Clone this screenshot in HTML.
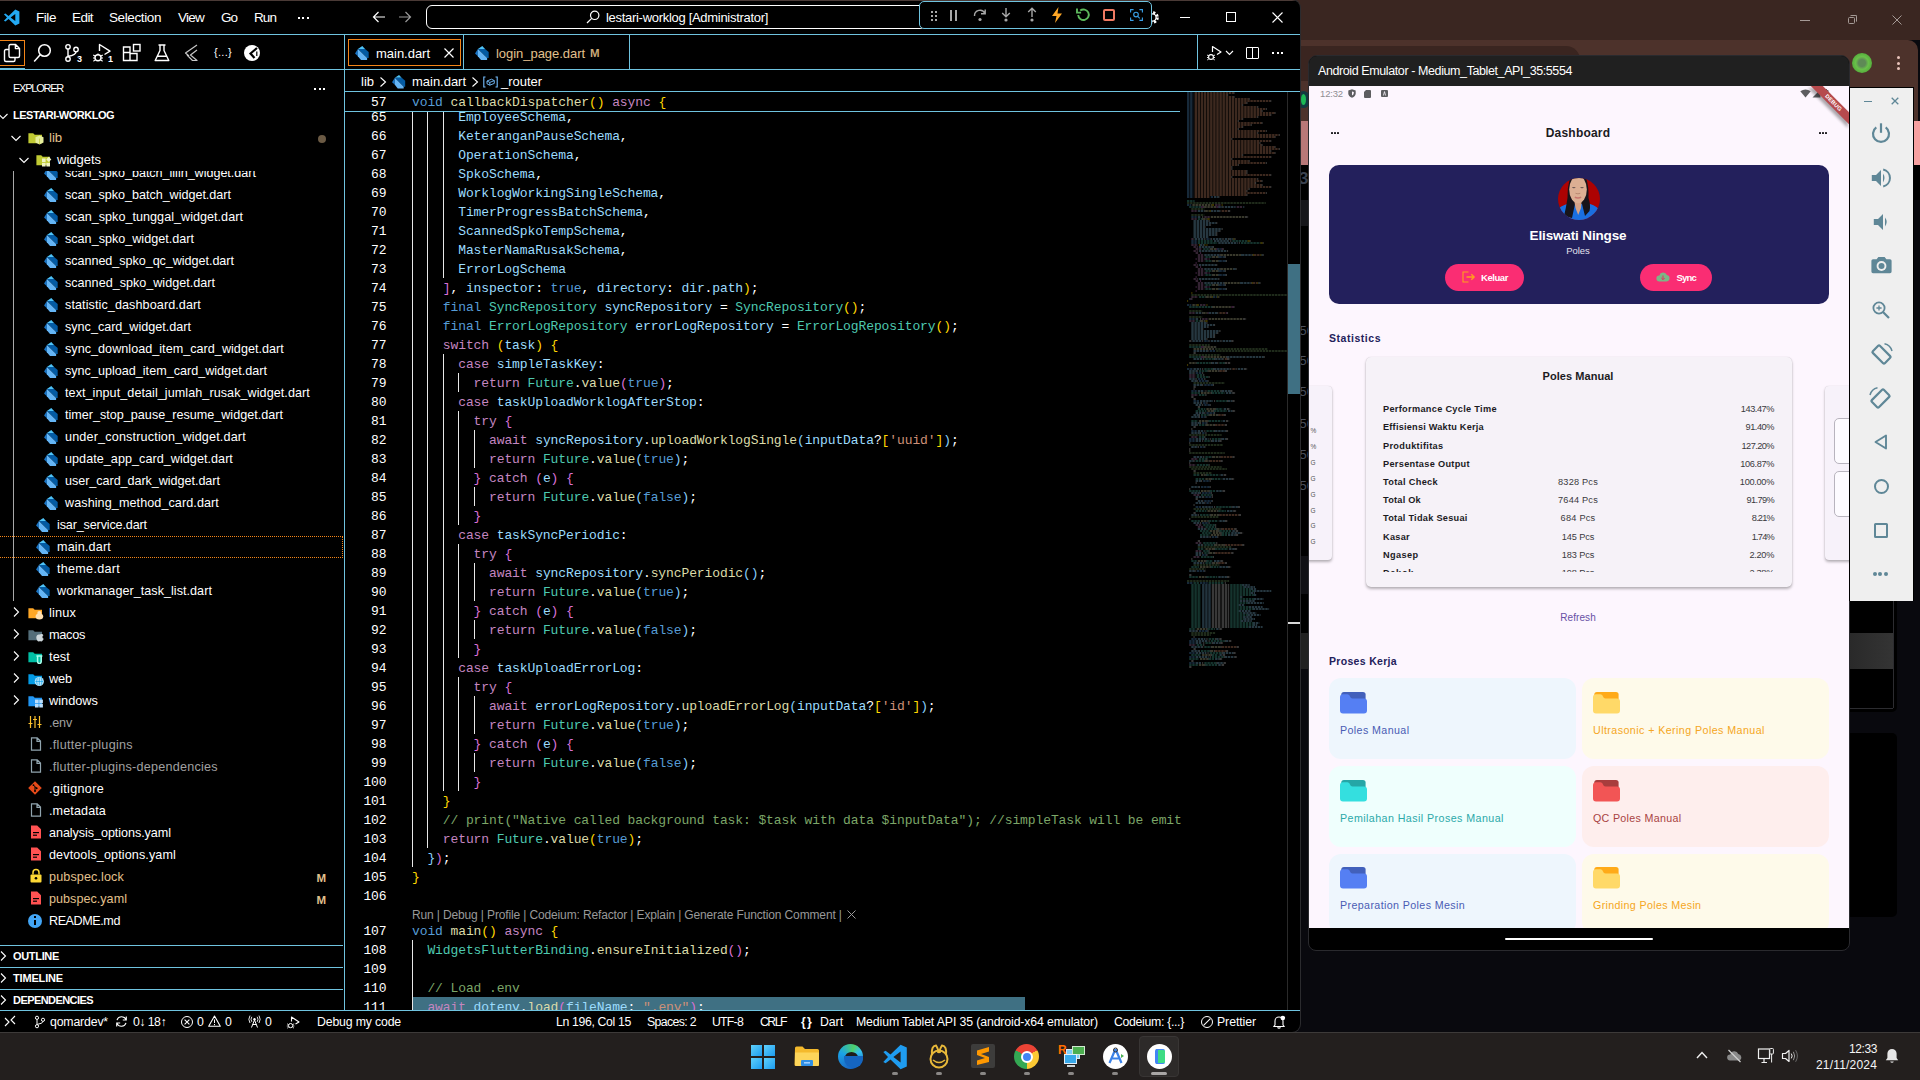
<!DOCTYPE html>
<html><head><meta charset="utf-8"><title>s</title><style>*{box-sizing:border-box;margin:0;padding:0}
html,body{width:1920px;height:1080px;overflow:hidden;background:#0a0a10;font-family:"Liberation Sans",sans-serif;color:#fff}
.a{position:absolute}
.t{position:absolute;white-space:pre;line-height:1}
svg{position:absolute;overflow:visible}
#vsc{position:absolute;left:0;top:0;width:1299.5px;height:1031.5px;background:#000;border-radius:0 8px 8px 0;box-shadow:0 0 0 1px #2b2b2e;overflow:hidden}
.hl{position:absolute;background:#6fc3df;height:1px}
.vl{position:absolute;background:#6fc3df;width:1px}
.code{position:absolute;left:345px;width:842px;height:19px;font-family:"Liberation Mono",monospace;font-size:13px;white-space:pre;line-height:19px;letter-spacing:-0.104px}
.ln{position:absolute;left:0;width:41.5px;text-align:right;color:#fff}
.cx{position:absolute;left:67px}
.k{color:#569cd6}.c{color:#c586c0}.f{color:#dcdcaa}.ty{color:#4ec9b0}.v{color:#9cdcfe}.s{color:#ce9178}.cm{color:#7ca668}.w{color:#fff}
.b1{color:#ffd700}.b2{color:#da70d6}.b3{color:#87cefa}
.ig{position:absolute;width:1px;background:#e8e8e8}
</style></head><body>
<div class="a" style="left:1296.00px;top:0.00px;width:624.00px;height:1033.00px;background:#09090e;"></div><div class="a" style="left:1296.00px;top:0.00px;width:624.00px;height:40.00px;background:#3a2621;"></div><div class="a" style="left:1296px;top:40px;width:622px;height:82px;background:#4d322b;border-radius:0 10px 0 0"></div><div class="a" style="left:1296.00px;top:45.50px;width:284.00px;height:35.00px;background:#3a2520;border-radius:0 14px 0 0"></div><div class="a" style="left:1800.00px;top:20.00px;width:10.00px;height:1.00px;background:#a59a96;"></div><div class="a" style="left:1848px;top:17px;width:7px;height:7px;border:1px solid #a59a96;border-radius:1.5px"></div><div class="a" style="left:1846px;top:15px;width:7px;height:7px;border-top:1px solid #a59a96;border-right:1px solid #a59a96;border-radius:1.5px;left:1850px"></div><svg style="left:1892.00px;top:15.00px;" width="10" height="10" viewBox="0 0 10 10"><path d="M0.5,0.5 L9.5,9.5 M9.5,0.5 L0.5,9.5" stroke="#a59a96" stroke-width="1"/></svg><div class="a" style="left:1852px;top:53px;width:20px;height:20px;border-radius:50%;background:radial-gradient(circle at 50% 50%,#5e8a56 0 25%,#6ac04a 45%,#3f9a2c 100%)"></div><div class="a" style="left:1896.6px;top:56.2px;width:3px;height:3px;border-radius:50%;background:#e9c3ba"></div><div class="a" style="left:1896.6px;top:61.7px;width:3px;height:3px;border-radius:50%;background:#e9c3ba"></div><div class="a" style="left:1896.6px;top:67.2px;width:3px;height:3px;border-radius:50%;background:#e9c3ba"></div><div class="a" style="left:1298px;top:91px;width:11px;height:17px;border-radius:6px;background:#123a40"></div><div class="a" style="left:1301px;top:94px;width:5px;height:11px;border-radius:50%;background:#1db954"></div><div class="a" style="left:1296.00px;top:121.00px;width:624.00px;height:44.00px;background:#f6a0a0;"></div><div class="a" style="left:1296.00px;top:121.00px;width:14.00px;height:44.00px;background:#b87878;"></div><div class="a" style="left:1296.00px;top:165.00px;width:624.00px;height:35.00px;background:#000;"></div><div class="a" style="left:1296.00px;top:200.00px;width:624.00px;height:833.00px;background:#09090e;"></div><div class="a" style="left:1296.00px;top:200.00px;width:14.00px;height:440.00px;background:#000;"></div><div class="t" style="left:1299.50px;top:323.85px;font-size:13.00px;color:#4a4f5c;">56</div><div class="t" style="left:1299.50px;top:353.85px;font-size:13.00px;color:#4a4f5c;">56</div><div class="t" style="left:1299.50px;top:384.85px;font-size:13.00px;color:#4a4f5c;">56</div><div class="t" style="left:1299.50px;top:416.85px;font-size:13.00px;color:#4a4f5c;">56</div><div class="t" style="left:1299.50px;top:447.85px;font-size:13.00px;color:#4a4f5c;">56</div><div class="t" style="left:1299.50px;top:478.85px;font-size:13.00px;color:#4a4f5c;">56</div><div class="t" style="left:1299.00px;top:169.85px;font-size:17.00px;color:#3a4250;font-weight:700;">3</div><div class="a" style="left:1300.00px;top:633.00px;width:9.00px;height:36.00px;background:#212121;"></div><div class="a" style="left:1300.00px;top:556.00px;width:9.00px;height:38.00px;background:#101014;"></div><div class="a" style="left:1300.00px;top:200.00px;width:9.00px;height:26.00px;background:#16161a;"></div><div class="a" style="left:1840px;top:600px;width:56.5px;height:112px;background:#000;border-radius:0 0 5px 0"></div><div class="a" style="left:1840px;top:633px;width:53px;height:36px;background:linear-gradient(90deg,#272727,#343434)"></div><div class="a" style="left:1893.00px;top:600.00px;width:1.00px;height:108.00px;background:#2c2c30;"></div><div class="a" style="left:1840.00px;top:707.50px;width:53.00px;height:1.00px;background:#2c2c30;"></div><div class="a" style="left:1840px;top:733px;width:56.5px;height:184px;background:#000;border-radius:0 5px 5px 0"></div>
<div id="vsc">
<div class="a" style="left:0.00px;top:0.00px;width:1301.00px;height:1.00px;background:#4a3a36;"></div><svg style="left:3.00px;top:9.00px;" width="17" height="17" viewBox="0 0 17 17"><path d="M12.3,0.6 L5.6,7 2.4,4.5 0.9,5.3 4,8.5 0.9,11.7 2.4,12.5 5.6,10 12.3,16.4 16.4,14.6 V2.4 Z M12.3,5 V12 L7.6,8.5 Z" fill="#23a9f2" fill-rule="evenodd"/></svg><div class="t" style="left:36.00px;top:11.10px;font-size:13.50px;color:#fff;letter-spacing:-0.438px;">File</div><div class="t" style="left:72.00px;top:11.10px;font-size:13.50px;color:#fff;letter-spacing:-0.566px;">Edit</div><div class="t" style="left:109.00px;top:11.10px;font-size:13.50px;color:#fff;letter-spacing:-0.393px;">Selection</div><div class="t" style="left:178.00px;top:11.10px;font-size:13.50px;color:#fff;letter-spacing:-0.754px;">View</div><div class="t" style="left:221.00px;top:11.10px;font-size:13.50px;color:#fff;letter-spacing:-1.004px;">Go</div><div class="t" style="left:254.00px;top:11.10px;font-size:13.50px;color:#fff;letter-spacing:-0.922px;">Run</div><div class="a" style="left:298.00px;top:16.50px;width:2.00px;height:2.00px;background:#fff;"></div><div class="a" style="left:302.30px;top:16.50px;width:2.00px;height:2.00px;background:#fff;"></div><div class="a" style="left:306.60px;top:16.50px;width:2.00px;height:2.00px;background:#fff;"></div><svg style="left:372.00px;top:10.00px;" width="14" height="14" viewBox="0 0 14 14"><path d="M13,7 H1.5 M6.5,2 L1.5,7 6.5,12" fill="none" stroke="#fff" stroke-width="1.2"/></svg><svg style="left:398.00px;top:10.00px;" width="14" height="14" viewBox="0 0 14 14"><path d="M1,7 H12.5 M7.5,2 L12.5,7 7.5,12" fill="none" stroke="#9a9a9a" stroke-width="1.2"/></svg><div class="a" style="left:426px;top:5px;width:500px;height:24px;border:1px solid #fff;border-radius:6px"></div><svg style="left:586.00px;top:10.00px;" width="14" height="14" viewBox="0 0 14 14"><circle cx="8.7" cy="5.3" r="4.2" fill="none" stroke="#fff" stroke-width="1.2"/><path d="M5.7,8.3 L1,13" stroke="#fff" stroke-width="1.2"/></svg><div class="t" style="left:606.00px;top:11.35px;font-size:13.00px;color:#fff;letter-spacing:-0.297px;">lestari-worklog [Administrator]</div><svg style="left:1144.00px;top:9.00px;" width="17" height="17" viewBox="0 0 17 17"><circle cx="8.5" cy="8.5" r="5" fill="none" stroke="#fff" stroke-width="2.6" stroke-dasharray="2.2 1.73"/><circle cx="8.5" cy="8.5" r="3.6" fill="none" stroke="#fff" stroke-width="1.3"/></svg><div class="a" style="left:919px;top:1px;width:233px;height:28px;background:#000;border:1px solid #6fc3df;border-radius:5px"></div><div class="a" style="left:931.00px;top:10.50px;width:2.00px;height:2.00px;background:#a8a8a8;"></div><div class="a" style="left:935.00px;top:10.50px;width:2.00px;height:2.00px;background:#a8a8a8;"></div><div class="a" style="left:931.00px;top:14.50px;width:2.00px;height:2.00px;background:#a8a8a8;"></div><div class="a" style="left:935.00px;top:14.50px;width:2.00px;height:2.00px;background:#a8a8a8;"></div><div class="a" style="left:931.00px;top:18.50px;width:2.00px;height:2.00px;background:#a8a8a8;"></div><div class="a" style="left:935.00px;top:18.50px;width:2.00px;height:2.00px;background:#a8a8a8;"></div><div class="a" style="left:950.00px;top:10.00px;width:1.60px;height:11.00px;background:#a8a8a8;"></div><div class="a" style="left:955.00px;top:10.00px;width:1.60px;height:11.00px;background:#a8a8a8;"></div><svg style="left:972.00px;top:7.00px;" width="16" height="16" viewBox="0 0 16 16"><path d="M2.5,9 A5.5,5.5 0 0 1 13,6.5 M13.2,2.5 V6.8 H9" fill="none" stroke="#a8a8a8" stroke-width="1.4"/><circle cx="8" cy="12.5" r="1.6" fill="#a8a8a8"/></svg><svg style="left:998.00px;top:7.00px;" width="16" height="16" viewBox="0 0 16 16"><path d="M8,1 V9.5 M4.2,6 L8,9.8 11.8,6" fill="none" stroke="#a8a8a8" stroke-width="1.4"/><circle cx="8" cy="13" r="1.6" fill="#a8a8a8"/></svg><svg style="left:1024.00px;top:7.00px;" width="16" height="16" viewBox="0 0 16 16"><path d="M8,10 V1.5 M4.2,5 L8,1.2 11.8,5" fill="none" stroke="#a8a8a8" stroke-width="1.4"/><circle cx="8" cy="13" r="1.6" fill="#a8a8a8"/></svg><svg style="left:1050.00px;top:6.00px;" width="14" height="18" viewBox="0 0 14 18"><path d="M8.5,1 L2,10 H6.5 L5,17 L12,7.5 H7.5 Z" fill="#ffa726"/></svg><svg style="left:1075.00px;top:6.00px;" width="17" height="17" viewBox="0 0 17 17"><path d="M3.2,9 A5.3,5.3 0 1 0 5.2,4.6 M2,2.5 V6.6 H6.1" fill="none" stroke="#5cb85c" stroke-width="1.9"/></svg><div class="a" style="left:1103px;top:8.5px;width:12px;height:12px;border:2px solid #f07a62;border-radius:2px"></div><svg style="left:1130.00px;top:9.00px;" width="13" height="12" viewBox="0 0 13 12"><path d="M0.6,3.6 V0.6 H3.6 M9.4,0.6 H12.4 V3.6 M12.4,8.4 V11.4 H9.4 M3.6,11.4 H0.6 V8.4" fill="none" stroke="#3aa0e8" stroke-width="1.1"/><circle cx="6" cy="5.6" r="2.3" fill="none" stroke="#3aa0e8" stroke-width="1.1"/><path d="M7.7,7.3 L9.8,9.4" stroke="#3aa0e8" stroke-width="1.1"/></svg><div class="a" style="left:1180.00px;top:16.50px;width:10.00px;height:1.00px;background:#fff;"></div><div class="a" style="left:1226px;top:12px;width:10px;height:10px;border:1px solid #fff"></div><svg style="left:1271.50px;top:11.50px;" width="11" height="11" viewBox="0 0 11 11"><path d="M0.5,0.5 L10.5,10.5 M10.5,0.5 L0.5,10.5" stroke="#fff" stroke-width="1.1"/></svg>
<div class="a" style="left:-1px;top:40px;width:26px;height:26px;border:1px solid #f38518"></div><div class="a" style="left:0.00px;top:67.50px;width:25.00px;height:2.00px;background:#6fc3df;"></div><svg style="left:3.00px;top:43.00px;" width="18" height="20" viewBox="0 0 18 20"><path d="M6,6.5 H3 Q1.5,6.5 1.5,8 V17 Q1.5,18.5 3,18.5 H10.5 Q12,18.5 12,17 V14.6" fill="none" stroke="#fff" stroke-width="1.4"/><path d="M7.5,1.5 H12.6 L16.5,5.4 V13 Q16.5,14.5 15,14.5 H7.5 Q6,14.5 6,13 V3 Q6,1.5 7.5,1.5 Z M12.4,1.7 V5.6 H16.3" fill="none" stroke="#fff" stroke-width="1.4" stroke-linejoin="round"/></svg><svg style="left:33.00px;top:43.00px;" width="20" height="20" viewBox="0 0 20 20"><circle cx="11.5" cy="7.5" r="5.8" fill="none" stroke="#fff" stroke-width="1.5"/><path d="M7.4,11.6 L1.2,18.5" stroke="#fff" stroke-width="1.5"/></svg><svg style="left:63.00px;top:43.00px;" width="22" height="20" viewBox="0 0 22 20"><circle cx="5" cy="3.8" r="2.2" fill="none" stroke="#fff" stroke-width="1.4"/><circle cx="5" cy="16" r="2.2" fill="none" stroke="#fff" stroke-width="1.4"/><circle cx="13" cy="6.5" r="2.2" fill="none" stroke="#fff" stroke-width="1.4"/><path d="M5,6 V13.8 M13,8.7 Q13,12 5.2,13.2" fill="none" stroke="#fff" stroke-width="1.4"/></svg><div class="t" style="left:77.00px;top:55.35px;font-size:9.00px;color:#fff;font-weight:700;">3</div><svg style="left:92.00px;top:43.00px;" width="22" height="20" viewBox="0 0 22 20"><path d="M7.5,8 V1.5 L18,8.2 L12.5,11.5" fill="none" stroke="#fff" stroke-width="1.4" stroke-linejoin="round"/><circle cx="6" cy="14.8" r="3" fill="none" stroke="#fff" stroke-width="1.4"/><path d="M1.2,12 L3.5,13.3 M1,15 H3 M1.4,18.3 L3.6,16.6 M10.8,12 L8.5,13.3 M11,15 H9 M10.6,18.3 L8.4,16.6 M6,11.8 V10.6" stroke="#fff" stroke-width="1.1"/></svg><div class="t" style="left:108.00px;top:55.35px;font-size:9.00px;color:#fff;font-weight:700;">1</div><svg style="left:122.00px;top:43.00px;" width="20" height="20" viewBox="0 0 20 20"><path d="M1.5,9.5 H8 V17.5 H1.5 Z M8,9.5 V17.5 H15 V10.5 H8 M1.5,9.5 V4 H8 V10 " fill="none" stroke="#fff" stroke-width="1.4"/><rect x="11.5" y="1.5" width="6.5" height="6.5" fill="none" stroke="#fff" stroke-width="1.4"/></svg><svg style="left:154.00px;top:44.00px;" width="16" height="18" viewBox="0 0 16 18"><path d="M4.5,1 H11.5 M6,1 V6.5 L1.2,16.5 H14.8 L10,6.5 V1 M3.2,12.2 H12.8" fill="none" stroke="#fff" stroke-width="1.4" stroke-linejoin="round"/></svg><svg style="left:184.00px;top:44.00px;" width="16" height="18" viewBox="0 0 16 18"><path d="M13,1 L1.5,9 L5,12 M13,6 L6.5,11 L13,16.5 H8.5 L3,11" fill="none" stroke="#c8c8c8" stroke-width="1.2" stroke-linejoin="round"/></svg><div class="t" style="left:214.00px;top:46.85px;font-size:11.00px;color:#fff;letter-spacing:0.297px;">{...}</div><div class="a" style="left:244px;top:45px;width:16px;height:16px;border-radius:50%;background:#fff"></div><svg style="left:244.00px;top:45.00px;" width="16" height="16" viewBox="0 0 16 16"><path d="M13,3 L6.5,8.5 L10.5,13" fill="none" stroke="#000" stroke-width="2.2"/><path d="M12.8,6.5 V11" stroke="#000" stroke-width="1.2"/></svg>
<div class="a" style="left:348px;top:39px;width:113px;height:27px;border:1px solid #f38518"></div><svg style="left:355.00px;top:46.00px;" width="14" height="14" viewBox="0 0 14 14"><polygon points="7.3,0 2.9,2.9 10.05,2.95" fill="#4fc3f7"/><polygon points="2.9,2.9 10.05,2.95 13.7,6 13.7,12.1 12.1,12.1" fill="#045ba3"/><polygon points="2.9,2.9 0.07,7.4 2.9,10.2" fill="#1b76c8"/><polygon points="2.9,2.9 12.1,12.1 12.1,13.9 6,13.9 2.9,10.2" fill="#64b5f6"/></svg><div class="t" style="left:376.00px;top:46.85px;font-size:13.00px;color:#fff;letter-spacing:-0.021px;">main.dart</div><svg style="left:443.50px;top:47.50px;" width="10" height="10" viewBox="0 0 10 10"><path d="M0.5,0.5 L9.5,9.5 M9.5,0.5 L0.5,9.5" stroke="#fff" stroke-width="1.2"/></svg><div class="vl" style="left:463px;top:35px;height:34px"></div><svg style="left:475.00px;top:46.00px;" width="14" height="14" viewBox="0 0 14 14"><polygon points="7.3,0 2.9,2.9 10.05,2.95" fill="#4fc3f7"/><polygon points="2.9,2.9 10.05,2.95 13.7,6 13.7,12.1 12.1,12.1" fill="#045ba3"/><polygon points="2.9,2.9 0.07,7.4 2.9,10.2" fill="#1b76c8"/><polygon points="2.9,2.9 12.1,12.1 12.1,13.9 6,13.9 2.9,10.2" fill="#64b5f6"/></svg><div class="t" style="left:496.00px;top:46.85px;font-size:13.00px;color:#e2c08d;letter-spacing:-0.042px;">login_page.dart</div><div class="t" style="left:590.00px;top:48.10px;font-size:11.50px;color:#c9a978;font-weight:700;">M</div><div class="vl" style="left:629px;top:35px;height:34px"></div><div class="vl" style="left:1197px;top:35px;height:34px"></div><svg style="left:1206.00px;top:44.00px;" width="18" height="18" viewBox="0 0 18 18"><path d="M6.5,8 V2.5 L15,8 L11,10.5" fill="none" stroke="#fff" stroke-width="1.2" stroke-linejoin="round"/><circle cx="5" cy="13" r="2.4" fill="none" stroke="#fff" stroke-width="1.1"/><path d="M1,11 L3,12 M1,13.5 H2.6 M1.2,16 L3,14.7 M9,11 L7,12 M9,13.5 H7.4 M8.8,16 L7,14.7" stroke="#fff" stroke-width="0.9"/></svg><svg style="left:1225.00px;top:49.00px;" width="9" height="8" viewBox="0 0 9 8"><polyline points="1,2 4.5,5.5 8,2" fill="none" stroke="#fff" stroke-width="1.1"/></svg><div class="a" style="left:1246px;top:46.5px;width:13px;height:12px;border:1.3px solid #fff;border-radius:1px"></div><div class="a" style="left:1252.00px;top:47.00px;width:1.30px;height:11.00px;background:#fff;"></div><div class="a" style="left:1272.00px;top:52.00px;width:2.00px;height:2.00px;background:#fff;"></div><div class="a" style="left:1276.50px;top:52.00px;width:2.00px;height:2.00px;background:#fff;"></div><div class="a" style="left:1281.00px;top:52.00px;width:2.00px;height:2.00px;background:#fff;"></div>
<div class="t" style="left:361.00px;top:75.35px;font-size:13.00px;color:#fff;letter-spacing:-0.002px;">lib</div><svg style="left:378.00px;top:76.00px;" width="10" height="12" viewBox="0 0 10 12"><polyline points="2.5,1.5 7.5,6 2.5,10.5" fill="none" stroke="#fff" stroke-width="1.1"/></svg><svg style="left:391.50px;top:74.50px;" width="13.5" height="13.5" viewBox="0 0 14 14"><polygon points="7.3,0 2.9,2.9 10.05,2.95" fill="#4fc3f7"/><polygon points="2.9,2.9 10.05,2.95 13.7,6 13.7,12.1 12.1,12.1" fill="#045ba3"/><polygon points="2.9,2.9 0.07,7.4 2.9,10.2" fill="#1b76c8"/><polygon points="2.9,2.9 12.1,12.1 12.1,13.9 6,13.9 2.9,10.2" fill="#64b5f6"/></svg><div class="t" style="left:412.00px;top:75.35px;font-size:13.00px;color:#fff;letter-spacing:-0.021px;">main.dart</div><svg style="left:470.00px;top:76.00px;" width="10" height="12" viewBox="0 0 10 12"><polyline points="2.5,1.5 7.5,6 2.5,10.5" fill="none" stroke="#fff" stroke-width="1.1"/></svg><svg style="left:483.00px;top:76.00px;" width="16" height="12" viewBox="0 0 16 12"><path d="M2.5,1 H0.8 V11 H2.5 M12.5,1 H14.2 V11 H12.5" fill="none" stroke="#75beff" stroke-width="1.1"/><path d="M4,5 L8.5,3.2 L11.3,4.6 V7.4 L6.8,9.2 L4,7.8 Z M4,5 L6.8,6.4 L11.3,4.6 M6.8,6.4 V9.2" fill="none" stroke="#75beff" stroke-width="0.9"/></svg><div class="t" style="left:501.00px;top:75.35px;font-size:13.00px;color:#fff;letter-spacing:-0.027px;">_router</div>
<div class="t" style="left:13.00px;top:82.85px;font-size:11.00px;color:#fff;letter-spacing:-1.239px;">EXPLORER</div><div class="a" style="left:314.00px;top:87.50px;width:2.00px;height:2.00px;background:#fff;"></div><div class="a" style="left:318.50px;top:87.50px;width:2.00px;height:2.00px;background:#fff;"></div><div class="a" style="left:323.00px;top:87.50px;width:2.00px;height:2.00px;background:#fff;"></div><svg style="left:-3.00px;top:109.50px;" width="12" height="12" viewBox="0 0 12 12"><polyline points="1.5,4 6,8.5 10.5,4" fill="none" stroke="#fff" stroke-width="1.1"/></svg><div class="t" style="left:13.00px;top:110.35px;font-size:11.00px;color:#fff;letter-spacing:-0.504px;font-weight:700;">LESTARI-WORKLOG</div><svg style="left:10.00px;top:131.50px;" width="12" height="12" viewBox="0 0 12 12"><polyline points="1.5,4 6,8.5 10.5,4" fill="none" stroke="#fff" stroke-width="1.1"/></svg><svg style="left:28.00px;top:131.00px;" width="16" height="14" viewBox="0 0 16 14"><path d="M0.4,2.2 h4.8 l1.5,1.5 h7.3 v8.6 h-13.6 z" fill="#c0ca33"/><path d="M7.5,6.2 L11.5,4.6 L15.5,6.2 V11.5 L11.5,13.4 L7.5,11.5 Z" fill="#e6ee9c"/><path d="M11.5,7.6 V13" stroke="#c0ca33" stroke-width=".7"/></svg><div class="t" style="left:49.00px;top:131.25px;font-size:13.20px;color:#e2c08d;">lib</div><div class="a" style="left:317.5px;top:134.5px;width:8px;height:8px;border-radius:50%;background:#6b5a44"></div><svg style="left:18.00px;top:153.50px;" width="12" height="12" viewBox="0 0 12 12"><polyline points="1.5,4 6,8.5 10.5,4" fill="none" stroke="#fff" stroke-width="1.1"/></svg><svg style="left:36.00px;top:153.00px;" width="16" height="14" viewBox="0 0 16 14"><path d="M0.4,2.2 h4.8 l1.5,1.5 h7.3 v8.6 h-13.6 z" fill="#c0ca33"/><rect x="6" y="5.5" width="3.6" height="3.6" fill="#f0f4c3"/><rect x="6" y="9.9" width="3.6" height="3.6" fill="#f0f4c3"/><rect x="10.4" y="9.9" width="3.6" height="3.6" fill="#f0f4c3"/><rect x="11" y="4.6" width="3.6" height="3.6" fill="#f0f4c3" transform="rotate(45 12.8 6.4)"/></svg><div class="t" style="left:57.00px;top:153.35px;font-size:13.00px;color:#fff;letter-spacing:-0.011px;">widgets</div><div class="a" style="left:13.00px;top:170.50px;width:1.00px;height:430.00px;background:#a8a8a8;"></div><div class="a" style="left:0;top:170.5px;width:343px;height:440px;overflow:hidden"><svg style="left:44.00px;top:-4.50px;" width="14" height="14" viewBox="0 0 14 14"><polygon points="7.3,0 2.9,2.9 10.05,2.95" fill="#4fc3f7"/><polygon points="2.9,2.9 10.05,2.95 13.7,6 13.7,12.1 12.1,12.1" fill="#045ba3"/><polygon points="2.9,2.9 0.07,7.4 2.9,10.2" fill="#1b76c8"/><polygon points="2.9,2.9 12.1,12.1 12.1,13.9 6,13.9 2.9,10.2" fill="#64b5f6"/></svg><div class="t" style="left:65.00px;top:-3.95px;font-size:12.60px;color:#fff;letter-spacing:-0.028px;">scan_spko_batch_lilin_widget.dart</div><svg style="left:44.00px;top:17.50px;" width="14" height="14" viewBox="0 0 14 14"><polygon points="7.3,0 2.9,2.9 10.05,2.95" fill="#4fc3f7"/><polygon points="2.9,2.9 10.05,2.95 13.7,6 13.7,12.1 12.1,12.1" fill="#045ba3"/><polygon points="2.9,2.9 0.07,7.4 2.9,10.2" fill="#1b76c8"/><polygon points="2.9,2.9 12.1,12.1 12.1,13.9 6,13.9 2.9,10.2" fill="#64b5f6"/></svg><div class="t" style="left:65.00px;top:18.05px;font-size:12.60px;color:#fff;letter-spacing:-0.026px;">scan_spko_batch_widget.dart</div><svg style="left:44.00px;top:39.50px;" width="14" height="14" viewBox="0 0 14 14"><polygon points="7.3,0 2.9,2.9 10.05,2.95" fill="#4fc3f7"/><polygon points="2.9,2.9 10.05,2.95 13.7,6 13.7,12.1 12.1,12.1" fill="#045ba3"/><polygon points="2.9,2.9 0.07,7.4 2.9,10.2" fill="#1b76c8"/><polygon points="2.9,2.9 12.1,12.1 12.1,13.9 6,13.9 2.9,10.2" fill="#64b5f6"/></svg><div class="t" style="left:65.00px;top:40.05px;font-size:12.60px;color:#fff;letter-spacing:0.027px;">scan_spko_tunggal_widget.dart</div><svg style="left:44.00px;top:61.50px;" width="14" height="14" viewBox="0 0 14 14"><polygon points="7.3,0 2.9,2.9 10.05,2.95" fill="#4fc3f7"/><polygon points="2.9,2.9 10.05,2.95 13.7,6 13.7,12.1 12.1,12.1" fill="#045ba3"/><polygon points="2.9,2.9 0.07,7.4 2.9,10.2" fill="#1b76c8"/><polygon points="2.9,2.9 12.1,12.1 12.1,13.9 6,13.9 2.9,10.2" fill="#64b5f6"/></svg><div class="t" style="left:65.00px;top:62.05px;font-size:12.60px;color:#fff;letter-spacing:0.006px;">scan_spko_widget.dart</div><svg style="left:44.00px;top:83.50px;" width="14" height="14" viewBox="0 0 14 14"><polygon points="7.3,0 2.9,2.9 10.05,2.95" fill="#4fc3f7"/><polygon points="2.9,2.9 10.05,2.95 13.7,6 13.7,12.1 12.1,12.1" fill="#045ba3"/><polygon points="2.9,2.9 0.07,7.4 2.9,10.2" fill="#1b76c8"/><polygon points="2.9,2.9 12.1,12.1 12.1,13.9 6,13.9 2.9,10.2" fill="#64b5f6"/></svg><div class="t" style="left:65.00px;top:84.05px;font-size:12.60px;color:#fff;letter-spacing:-0.045px;">scanned_spko_qc_widget.dart</div><svg style="left:44.00px;top:105.50px;" width="14" height="14" viewBox="0 0 14 14"><polygon points="7.3,0 2.9,2.9 10.05,2.95" fill="#4fc3f7"/><polygon points="2.9,2.9 10.05,2.95 13.7,6 13.7,12.1 12.1,12.1" fill="#045ba3"/><polygon points="2.9,2.9 0.07,7.4 2.9,10.2" fill="#1b76c8"/><polygon points="2.9,2.9 12.1,12.1 12.1,13.9 6,13.9 2.9,10.2" fill="#64b5f6"/></svg><div class="t" style="left:65.00px;top:106.05px;font-size:12.60px;color:#fff;letter-spacing:0.004px;">scanned_spko_widget.dart</div><svg style="left:44.00px;top:127.50px;" width="14" height="14" viewBox="0 0 14 14"><polygon points="7.3,0 2.9,2.9 10.05,2.95" fill="#4fc3f7"/><polygon points="2.9,2.9 10.05,2.95 13.7,6 13.7,12.1 12.1,12.1" fill="#045ba3"/><polygon points="2.9,2.9 0.07,7.4 2.9,10.2" fill="#1b76c8"/><polygon points="2.9,2.9 12.1,12.1 12.1,13.9 6,13.9 2.9,10.2" fill="#64b5f6"/></svg><div class="t" style="left:65.00px;top:128.05px;font-size:12.60px;color:#fff;letter-spacing:0.093px;">statistic_dashboard.dart</div><svg style="left:44.00px;top:149.50px;" width="14" height="14" viewBox="0 0 14 14"><polygon points="7.3,0 2.9,2.9 10.05,2.95" fill="#4fc3f7"/><polygon points="2.9,2.9 10.05,2.95 13.7,6 13.7,12.1 12.1,12.1" fill="#045ba3"/><polygon points="2.9,2.9 0.07,7.4 2.9,10.2" fill="#1b76c8"/><polygon points="2.9,2.9 12.1,12.1 12.1,13.9 6,13.9 2.9,10.2" fill="#64b5f6"/></svg><div class="t" style="left:65.00px;top:150.05px;font-size:12.60px;color:#fff;letter-spacing:-0.003px;">sync_card_widget.dart</div><svg style="left:44.00px;top:171.50px;" width="14" height="14" viewBox="0 0 14 14"><polygon points="7.3,0 2.9,2.9 10.05,2.95" fill="#4fc3f7"/><polygon points="2.9,2.9 10.05,2.95 13.7,6 13.7,12.1 12.1,12.1" fill="#045ba3"/><polygon points="2.9,2.9 0.07,7.4 2.9,10.2" fill="#1b76c8"/><polygon points="2.9,2.9 12.1,12.1 12.1,13.9 6,13.9 2.9,10.2" fill="#64b5f6"/></svg><div class="t" style="left:65.00px;top:172.05px;font-size:12.60px;color:#fff;letter-spacing:0.033px;">sync_download_item_card_widget.dart</div><svg style="left:44.00px;top:193.50px;" width="14" height="14" viewBox="0 0 14 14"><polygon points="7.3,0 2.9,2.9 10.05,2.95" fill="#4fc3f7"/><polygon points="2.9,2.9 10.05,2.95 13.7,6 13.7,12.1 12.1,12.1" fill="#045ba3"/><polygon points="2.9,2.9 0.07,7.4 2.9,10.2" fill="#1b76c8"/><polygon points="2.9,2.9 12.1,12.1 12.1,13.9 6,13.9 2.9,10.2" fill="#64b5f6"/></svg><div class="t" style="left:65.00px;top:194.05px;font-size:12.60px;color:#fff;letter-spacing:0.008px;">sync_upload_item_card_widget.dart</div><svg style="left:44.00px;top:215.50px;" width="14" height="14" viewBox="0 0 14 14"><polygon points="7.3,0 2.9,2.9 10.05,2.95" fill="#4fc3f7"/><polygon points="2.9,2.9 10.05,2.95 13.7,6 13.7,12.1 12.1,12.1" fill="#045ba3"/><polygon points="2.9,2.9 0.07,7.4 2.9,10.2" fill="#1b76c8"/><polygon points="2.9,2.9 12.1,12.1 12.1,13.9 6,13.9 2.9,10.2" fill="#64b5f6"/></svg><div class="t" style="left:65.00px;top:216.05px;font-size:12.60px;color:#fff;letter-spacing:0.063px;">text_input_detail_jumlah_rusak_widget.dart</div><svg style="left:44.00px;top:237.50px;" width="14" height="14" viewBox="0 0 14 14"><polygon points="7.3,0 2.9,2.9 10.05,2.95" fill="#4fc3f7"/><polygon points="2.9,2.9 10.05,2.95 13.7,6 13.7,12.1 12.1,12.1" fill="#045ba3"/><polygon points="2.9,2.9 0.07,7.4 2.9,10.2" fill="#1b76c8"/><polygon points="2.9,2.9 12.1,12.1 12.1,13.9 6,13.9 2.9,10.2" fill="#64b5f6"/></svg><div class="t" style="left:65.00px;top:238.05px;font-size:12.60px;color:#fff;letter-spacing:0.005px;">timer_stop_pause_resume_widget.dart</div><svg style="left:44.00px;top:259.50px;" width="14" height="14" viewBox="0 0 14 14"><polygon points="7.3,0 2.9,2.9 10.05,2.95" fill="#4fc3f7"/><polygon points="2.9,2.9 10.05,2.95 13.7,6 13.7,12.1 12.1,12.1" fill="#045ba3"/><polygon points="2.9,2.9 0.07,7.4 2.9,10.2" fill="#1b76c8"/><polygon points="2.9,2.9 12.1,12.1 12.1,13.9 6,13.9 2.9,10.2" fill="#64b5f6"/></svg><div class="t" style="left:65.00px;top:260.05px;font-size:12.60px;color:#fff;letter-spacing:0.173px;">under_construction_widget.dart</div><svg style="left:44.00px;top:281.50px;" width="14" height="14" viewBox="0 0 14 14"><polygon points="7.3,0 2.9,2.9 10.05,2.95" fill="#4fc3f7"/><polygon points="2.9,2.9 10.05,2.95 13.7,6 13.7,12.1 12.1,12.1" fill="#045ba3"/><polygon points="2.9,2.9 0.07,7.4 2.9,10.2" fill="#1b76c8"/><polygon points="2.9,2.9 12.1,12.1 12.1,13.9 6,13.9 2.9,10.2" fill="#64b5f6"/></svg><div class="t" style="left:65.00px;top:282.05px;font-size:12.60px;color:#fff;letter-spacing:0.047px;">update_app_card_widget.dart</div><svg style="left:44.00px;top:303.50px;" width="14" height="14" viewBox="0 0 14 14"><polygon points="7.3,0 2.9,2.9 10.05,2.95" fill="#4fc3f7"/><polygon points="2.9,2.9 10.05,2.95 13.7,6 13.7,12.1 12.1,12.1" fill="#045ba3"/><polygon points="2.9,2.9 0.07,7.4 2.9,10.2" fill="#1b76c8"/><polygon points="2.9,2.9 12.1,12.1 12.1,13.9 6,13.9 2.9,10.2" fill="#64b5f6"/></svg><div class="t" style="left:65.00px;top:304.05px;font-size:12.60px;color:#fff;letter-spacing:-0.046px;">user_card_dark_widget.dart</div><svg style="left:44.00px;top:325.50px;" width="14" height="14" viewBox="0 0 14 14"><polygon points="7.3,0 2.9,2.9 10.05,2.95" fill="#4fc3f7"/><polygon points="2.9,2.9 10.05,2.95 13.7,6 13.7,12.1 12.1,12.1" fill="#045ba3"/><polygon points="2.9,2.9 0.07,7.4 2.9,10.2" fill="#1b76c8"/><polygon points="2.9,2.9 12.1,12.1 12.1,13.9 6,13.9 2.9,10.2" fill="#64b5f6"/></svg><div class="t" style="left:65.00px;top:326.05px;font-size:12.60px;color:#fff;letter-spacing:0.084px;">washing_method_card.dart</div></div><svg style="left:36.00px;top:518.00px;" width="14" height="14" viewBox="0 0 14 14"><polygon points="7.3,0 2.9,2.9 10.05,2.95" fill="#4fc3f7"/><polygon points="2.9,2.9 10.05,2.95 13.7,6 13.7,12.1 12.1,12.1" fill="#045ba3"/><polygon points="2.9,2.9 0.07,7.4 2.9,10.2" fill="#1b76c8"/><polygon points="2.9,2.9 12.1,12.1 12.1,13.9 6,13.9 2.9,10.2" fill="#64b5f6"/></svg><div class="t" style="left:57.00px;top:518.55px;font-size:12.60px;color:#fff;letter-spacing:-0.143px;">isar_service.dart</div><svg style="left:36.00px;top:540.00px;" width="14" height="14" viewBox="0 0 14 14"><polygon points="7.3,0 2.9,2.9 10.05,2.95" fill="#4fc3f7"/><polygon points="2.9,2.9 10.05,2.95 13.7,6 13.7,12.1 12.1,12.1" fill="#045ba3"/><polygon points="2.9,2.9 0.07,7.4 2.9,10.2" fill="#1b76c8"/><polygon points="2.9,2.9 12.1,12.1 12.1,13.9 6,13.9 2.9,10.2" fill="#64b5f6"/></svg><div class="t" style="left:57.00px;top:540.55px;font-size:12.60px;color:#fff;letter-spacing:0.164px;">main.dart</div><svg style="left:36.00px;top:562.00px;" width="14" height="14" viewBox="0 0 14 14"><polygon points="7.3,0 2.9,2.9 10.05,2.95" fill="#4fc3f7"/><polygon points="2.9,2.9 10.05,2.95 13.7,6 13.7,12.1 12.1,12.1" fill="#045ba3"/><polygon points="2.9,2.9 0.07,7.4 2.9,10.2" fill="#1b76c8"/><polygon points="2.9,2.9 12.1,12.1 12.1,13.9 6,13.9 2.9,10.2" fill="#64b5f6"/></svg><div class="t" style="left:57.00px;top:562.55px;font-size:12.60px;color:#fff;letter-spacing:0.277px;">theme.dart</div><svg style="left:36.00px;top:584.00px;" width="14" height="14" viewBox="0 0 14 14"><polygon points="7.3,0 2.9,2.9 10.05,2.95" fill="#4fc3f7"/><polygon points="2.9,2.9 10.05,2.95 13.7,6 13.7,12.1 12.1,12.1" fill="#045ba3"/><polygon points="2.9,2.9 0.07,7.4 2.9,10.2" fill="#1b76c8"/><polygon points="2.9,2.9 12.1,12.1 12.1,13.9 6,13.9 2.9,10.2" fill="#64b5f6"/></svg><div class="t" style="left:57.00px;top:584.55px;font-size:12.60px;color:#fff;letter-spacing:0.036px;">workmanager_task_list.dart</div><div class="a" style="left:-1px;top:535.5px;width:344px;height:22px;border:1px dotted #f38518"></div><svg style="left:10.00px;top:606.00px;" width="12" height="12" viewBox="0 0 12 12"><polyline points="4,1.5 8.5,6 4,10.5" fill="none" stroke="#fff" stroke-width="1.1"/></svg><svg style="left:28.00px;top:605.50px;" width="16" height="14" viewBox="0 0 16 14"><path d="M0.4,2.2 h4.8 l1.5,1.5 h7.3 v8.6 h-13.6 z" fill="#ffa726"/><ellipse cx="11.4" cy="10.6" rx="3.8" ry="3" fill="#ffe0b2"/><circle cx="11.4" cy="7" r="2.1" fill="#ffe0b2"/></svg><div class="t" style="left:49.00px;top:606.95px;font-size:12.80px;color:#fff;letter-spacing:0.135px;">linux</div><svg style="left:10.00px;top:628.00px;" width="12" height="12" viewBox="0 0 12 12"><polyline points="4,1.5 8.5,6 4,10.5" fill="none" stroke="#fff" stroke-width="1.1"/></svg><svg style="left:28.00px;top:627.50px;" width="16" height="14" viewBox="0 0 16 14"><path d="M0.4,2.2 h4.8 l1.5,1.5 h7.3 v8.6 h-13.6 z" fill="#546e7a"/><path d="M11.6,6.6 c1.6,-1.2 3.4,-.4 3.8,.6 c-1.4,.9 -1.2,3 .3,3.6 c-.5,1.5 -1.6,2.8 -2.6,2.6 c-.8,-.3 -1.3,-.3 -2.1,0 c-1.2,.3 -2.7,-2 -2.7,-4 c0,-2.4 2,-3.5 3.3,-2.8 Z" fill="#cfd8dc"/></svg><div class="t" style="left:49.00px;top:628.95px;font-size:12.80px;color:#fff;letter-spacing:-0.340px;">macos</div><svg style="left:10.00px;top:650.00px;" width="12" height="12" viewBox="0 0 12 12"><polyline points="4,1.5 8.5,6 4,10.5" fill="none" stroke="#fff" stroke-width="1.1"/></svg><svg style="left:28.00px;top:649.50px;" width="16" height="14" viewBox="0 0 16 14"><path d="M0.4,2.2 h4.8 l1.5,1.5 h7.3 v8.6 h-13.6 z" fill="#00bfa5"/><path d="M8.4,6 h6 M9.6,6 v5.4 a1.8,1.8 0 0 0 3.6,0 V6" fill="none" stroke="#a7ffeb" stroke-width="1.5"/></svg><div class="t" style="left:49.00px;top:650.95px;font-size:12.80px;color:#fff;letter-spacing:0.092px;">test</div><svg style="left:10.00px;top:672.00px;" width="12" height="12" viewBox="0 0 12 12"><polyline points="4,1.5 8.5,6 4,10.5" fill="none" stroke="#fff" stroke-width="1.1"/></svg><svg style="left:28.00px;top:671.50px;" width="16" height="14" viewBox="0 0 16 14"><path d="M0.4,2.2 h4.8 l1.5,1.5 h7.3 v8.6 h-13.6 z" fill="#039be5"/><circle cx="11.3" cy="9.5" r="4.6" fill="#b3e5fc"/><path d="M7.4,9.5 h7.8 M11.3,5.6 v7.8 M9.3,6.2 q-1.5,3.3 0,6.6 M13.3,6.2 q1.5,3.3 0,6.6" fill="none" stroke="#039be5" stroke-width=".6"/></svg><div class="t" style="left:49.00px;top:672.95px;font-size:12.80px;color:#fff;letter-spacing:-0.160px;">web</div><svg style="left:10.00px;top:694.00px;" width="12" height="12" viewBox="0 0 12 12"><polyline points="4,1.5 8.5,6 4,10.5" fill="none" stroke="#fff" stroke-width="1.1"/></svg><svg style="left:28.00px;top:693.50px;" width="16" height="14" viewBox="0 0 16 14"><path d="M0.4,2.2 h4.8 l1.5,1.5 h7.3 v8.6 h-13.6 z" fill="#2196f3"/><rect x="7" y="5.6" width="3.6" height="3.6" fill="#bbdefb"/><rect x="11.3" y="5.6" width="3.6" height="3.6" fill="#bbdefb"/><rect x="7" y="9.9" width="3.6" height="3.6" fill="#bbdefb"/><rect x="11.3" y="9.9" width="3.6" height="3.6" fill="#bbdefb"/></svg><div class="t" style="left:49.00px;top:694.95px;font-size:12.80px;color:#fff;letter-spacing:-0.013px;">windows</div><svg style="left:28.00px;top:715.00px;" width="14" height="14" viewBox="0 0 14 14"><path d="M2.5,1 V13 M7,1 V13 M11.5,1 V13 M0.5,8.5 H4.5 M5,4.5 H9 M9.5,9.5 H13.5" fill="none" stroke="#fbc02d" stroke-width="1.2"/></svg><div class="t" style="left:49.00px;top:716.55px;font-size:12.60px;color:#a0a0a0;letter-spacing:-0.204px;">.env</div><svg style="left:29.50px;top:737.00px;" width="12" height="14" viewBox="0 0 12 14"><path d="M1.5,0.8 h5.7 l3.3,3.3 v9.1 h-9 z M7,0.8 v3.5 h3.5" fill="none" stroke="#90a4ae" stroke-width="1.2"/></svg><div class="t" style="left:49.00px;top:738.55px;font-size:12.60px;color:#a0a0a0;letter-spacing:0.304px;">.flutter-plugins</div><svg style="left:29.50px;top:759.00px;" width="12" height="14" viewBox="0 0 12 14"><path d="M1.5,0.8 h5.7 l3.3,3.3 v9.1 h-9 z M7,0.8 v3.5 h3.5" fill="none" stroke="#90a4ae" stroke-width="1.2"/></svg><div class="t" style="left:49.00px;top:760.55px;font-size:12.60px;color:#a0a0a0;letter-spacing:0.248px;">.flutter-plugins-dependencies</div><svg style="left:28.00px;top:781.00px;" width="14" height="14" viewBox="0 0 14 14"><rect x="2.2" y="2.2" width="9.6" height="9.6" fill="#e64a19" transform="rotate(45 7 7)"/><path d="M5.6,4.3 L8.4,7.1 M7,5.7 V10" stroke="#000" stroke-width="1"/><circle cx="7" cy="10" r="1" fill="#000"/><circle cx="8.6" cy="7.3" r="1" fill="#000"/><circle cx="5.5" cy="4.2" r=".9" fill="#000"/></svg><div class="t" style="left:49.00px;top:782.55px;font-size:12.60px;color:#fff;letter-spacing:0.317px;">.gitignore</div><svg style="left:29.50px;top:803.00px;" width="12" height="14" viewBox="0 0 12 14"><path d="M1.5,0.8 h5.7 l3.3,3.3 v9.1 h-9 z M7,0.8 v3.5 h3.5" fill="none" stroke="#90a4ae" stroke-width="1.2"/></svg><div class="t" style="left:49.00px;top:804.55px;font-size:12.60px;color:#fff;letter-spacing:0.107px;">.metadata</div><svg style="left:29.50px;top:825.00px;" width="12" height="14" viewBox="0 0 12 14"><path d="M1,0.5 h6.2 l3.8,3.8 v9.2 h-10 z" fill="#ff5252"/><path d="M7,0.5 v4 h4" fill="#000" opacity=".0"/><rect x="3" y="7" width="6" height="1.2" fill="#000"/><rect x="3" y="9.6" width="4" height="1.2" fill="#000"/></svg><div class="t" style="left:49.00px;top:826.55px;font-size:12.60px;color:#fff;letter-spacing:-0.060px;">analysis_options.yaml</div><svg style="left:29.50px;top:847.00px;" width="12" height="14" viewBox="0 0 12 14"><path d="M1,0.5 h6.2 l3.8,3.8 v9.2 h-10 z" fill="#ff5252"/><path d="M7,0.5 v4 h4" fill="#000" opacity=".0"/><rect x="3" y="7" width="6" height="1.2" fill="#000"/><rect x="3" y="9.6" width="4" height="1.2" fill="#000"/></svg><div class="t" style="left:49.00px;top:848.55px;font-size:12.60px;color:#fff;letter-spacing:0.111px;">devtools_options.yaml</div><svg style="left:29.50px;top:868.50px;" width="12" height="14" viewBox="0 0 12 14"><rect x="0.5" y="5.5" width="11" height="8" rx="1" fill="#fdd835"/><path d="M3,5.5 V3.6 a3,3 0 0 1 6,0 V5.5" fill="none" stroke="#fdd835" stroke-width="1.5"/><circle cx="6" cy="9.3" r="1.3" fill="#000"/></svg><div class="t" style="left:49.00px;top:870.55px;font-size:12.60px;color:#e2c08d;letter-spacing:0.121px;">pubspec.lock</div><div class="t" style="left:316.50px;top:872.60px;font-size:11.50px;color:#e2c08d;font-weight:700;">M</div><svg style="left:29.50px;top:891.00px;" width="12" height="14" viewBox="0 0 12 14"><path d="M1,0.5 h6.2 l3.8,3.8 v9.2 h-10 z" fill="#ff5252"/><path d="M7,0.5 v4 h4" fill="#000" opacity=".0"/><rect x="3" y="7" width="6" height="1.2" fill="#000"/><rect x="3" y="9.6" width="4" height="1.2" fill="#000"/></svg><div class="t" style="left:49.00px;top:892.55px;font-size:12.60px;color:#e2c08d;letter-spacing:0.022px;">pubspec.yaml</div><div class="t" style="left:316.50px;top:894.60px;font-size:11.50px;color:#e2c08d;font-weight:700;">M</div><div class="a" style="left:28px;top:913.5px;width:14px;height:14px;border-radius:50%;background:#42a5f5"></div><div class="a" style="left:34.20px;top:919.50px;width:1.80px;height:5.00px;background:#000;"></div><div class="a" style="left:34.20px;top:916.30px;width:1.80px;height:1.80px;background:#000;"></div><div class="t" style="left:49.00px;top:914.55px;font-size:12.60px;color:#fff;letter-spacing:-0.435px;">README.md</div><div class="hl" style="left:0;top:945px;width:343px"></div><svg style="left:-3.00px;top:950.00px;" width="12" height="12" viewBox="0 0 12 12"><polyline points="4,1.5 8.5,6 4,10.5" fill="none" stroke="#fff" stroke-width="1.1"/></svg><div class="t" style="left:13.00px;top:951.35px;font-size:11.00px;color:#fff;letter-spacing:-0.325px;font-weight:700;">OUTLINE</div><div class="hl" style="left:0;top:967px;width:343px"></div><svg style="left:-3.00px;top:972.00px;" width="12" height="12" viewBox="0 0 12 12"><polyline points="4,1.5 8.5,6 4,10.5" fill="none" stroke="#fff" stroke-width="1.1"/></svg><div class="t" style="left:13.00px;top:973.35px;font-size:11.00px;color:#fff;letter-spacing:-0.166px;font-weight:700;">TIMELINE</div><div class="hl" style="left:0;top:989px;width:343px"></div><svg style="left:-3.00px;top:994.00px;" width="12" height="12" viewBox="0 0 12 12"><polyline points="4,1.5 8.5,6 4,10.5" fill="none" stroke="#fff" stroke-width="1.1"/></svg><div class="t" style="left:13.00px;top:995.35px;font-size:11.00px;color:#fff;letter-spacing:-0.566px;font-weight:700;">DEPENDENCIES</div>
<div class="a" style="left:345px;top:111.5px;width:842px;height:899px;overflow:hidden"><div class="a" style="left:67.00px;top:885.00px;width:613.00px;height:19.00px;background:#3f7083;"></div><div class="code" style="left:0;top:-4.0px"><span class="ln">65</span><i class="ig" style="left:67.0px;top:-1px;height:19px"></i><i class="ig" style="left:82.4px;top:-1px;height:19px"></i><i class="ig" style="left:97.8px;top:-1px;height:19px"></i><span class="cx" style="left:113.2px"><span class="v">EmployeeSchema</span><span class="w">,</span></span></div><div class="code" style="left:0;top:15.0px"><span class="ln">66</span><i class="ig" style="left:67.0px;top:-1px;height:19px"></i><i class="ig" style="left:82.4px;top:-1px;height:19px"></i><i class="ig" style="left:97.8px;top:-1px;height:19px"></i><span class="cx" style="left:113.2px"><span class="v">KeteranganPauseSchema</span><span class="w">,</span></span></div><div class="code" style="left:0;top:34.0px"><span class="ln">67</span><i class="ig" style="left:67.0px;top:-1px;height:19px"></i><i class="ig" style="left:82.4px;top:-1px;height:19px"></i><i class="ig" style="left:97.8px;top:-1px;height:19px"></i><span class="cx" style="left:113.2px"><span class="v">OperationSchema</span><span class="w">,</span></span></div><div class="code" style="left:0;top:53.0px"><span class="ln">68</span><i class="ig" style="left:67.0px;top:-1px;height:19px"></i><i class="ig" style="left:82.4px;top:-1px;height:19px"></i><i class="ig" style="left:97.8px;top:-1px;height:19px"></i><span class="cx" style="left:113.2px"><span class="v">SpkoSchema</span><span class="w">,</span></span></div><div class="code" style="left:0;top:72.0px"><span class="ln">69</span><i class="ig" style="left:67.0px;top:-1px;height:19px"></i><i class="ig" style="left:82.4px;top:-1px;height:19px"></i><i class="ig" style="left:97.8px;top:-1px;height:19px"></i><span class="cx" style="left:113.2px"><span class="v">WorklogWorkingSingleSchema</span><span class="w">,</span></span></div><div class="code" style="left:0;top:91.0px"><span class="ln">70</span><i class="ig" style="left:67.0px;top:-1px;height:19px"></i><i class="ig" style="left:82.4px;top:-1px;height:19px"></i><i class="ig" style="left:97.8px;top:-1px;height:19px"></i><span class="cx" style="left:113.2px"><span class="v">TimerProgressBatchSchema</span><span class="w">,</span></span></div><div class="code" style="left:0;top:110.0px"><span class="ln">71</span><i class="ig" style="left:67.0px;top:-1px;height:19px"></i><i class="ig" style="left:82.4px;top:-1px;height:19px"></i><i class="ig" style="left:97.8px;top:-1px;height:19px"></i><span class="cx" style="left:113.2px"><span class="v">ScannedSpkoTempSchema</span><span class="w">,</span></span></div><div class="code" style="left:0;top:129.0px"><span class="ln">72</span><i class="ig" style="left:67.0px;top:-1px;height:19px"></i><i class="ig" style="left:82.4px;top:-1px;height:19px"></i><i class="ig" style="left:97.8px;top:-1px;height:19px"></i><span class="cx" style="left:113.2px"><span class="v">MasterNamaRusakSchema</span><span class="w">,</span></span></div><div class="code" style="left:0;top:148.0px"><span class="ln">73</span><i class="ig" style="left:67.0px;top:-1px;height:19px"></i><i class="ig" style="left:82.4px;top:-1px;height:19px"></i><i class="ig" style="left:97.8px;top:-1px;height:19px"></i><span class="cx" style="left:113.2px"><span class="v">ErrorLogSchema</span></span></div><div class="code" style="left:0;top:167.0px"><span class="ln">74</span><i class="ig" style="left:67.0px;top:-1px;height:19px"></i><i class="ig" style="left:82.4px;top:-1px;height:19px"></i><span class="cx" style="left:97.8px"><span class="b2">]</span><span class="w">, </span><span class="v">inspector</span><span class="w">: </span><span class="k">true</span><span class="w">, </span><span class="v">directory</span><span class="w">: </span><span class="v">dir</span><span class="w">.</span><span class="v">path</span><span class="b1">)</span><span class="w">;</span></span></div><div class="code" style="left:0;top:186.0px"><span class="ln">75</span><i class="ig" style="left:67.0px;top:-1px;height:19px"></i><i class="ig" style="left:82.4px;top:-1px;height:19px"></i><span class="cx" style="left:97.8px"><span class="k">final</span><span class="w"> </span><span class="ty">SyncRepository</span><span class="w"> </span><span class="v">syncRepository</span><span class="w"> = </span><span class="ty">SyncRepository</span><span class="b1">()</span><span class="w">;</span></span></div><div class="code" style="left:0;top:205.0px"><span class="ln">76</span><i class="ig" style="left:67.0px;top:-1px;height:19px"></i><i class="ig" style="left:82.4px;top:-1px;height:19px"></i><span class="cx" style="left:97.8px"><span class="k">final</span><span class="w"> </span><span class="ty">ErrorLogRepository</span><span class="w"> </span><span class="v">errorLogRepository</span><span class="w"> = </span><span class="ty">ErrorLogRepository</span><span class="b1">()</span><span class="w">;</span></span></div><div class="code" style="left:0;top:224.0px"><span class="ln">77</span><i class="ig" style="left:67.0px;top:-1px;height:19px"></i><i class="ig" style="left:82.4px;top:-1px;height:19px"></i><span class="cx" style="left:97.8px"><span class="c">switch</span><span class="w"> </span><span class="b1">(</span><span class="v">task</span><span class="b1">)</span><span class="w"> </span><span class="b1">{</span></span></div><div class="code" style="left:0;top:243.0px"><span class="ln">78</span><i class="ig" style="left:67.0px;top:-1px;height:19px"></i><i class="ig" style="left:82.4px;top:-1px;height:19px"></i><i class="ig" style="left:97.8px;top:-1px;height:19px"></i><span class="cx" style="left:113.2px"><span class="c">case</span><span class="w"> </span><span class="v">simpleTaskKey</span><span class="w">:</span></span></div><div class="code" style="left:0;top:262.0px"><span class="ln">79</span><i class="ig" style="left:67.0px;top:-1px;height:19px"></i><i class="ig" style="left:82.4px;top:-1px;height:19px"></i><i class="ig" style="left:97.8px;top:-1px;height:19px"></i><i class="ig" style="left:113.2px;top:-1px;height:19px"></i><span class="cx" style="left:128.6px"><span class="c">return</span><span class="w"> </span><span class="ty">Future</span><span class="w">.</span><span class="f">value</span><span class="b2">(</span><span class="k">true</span><span class="b2">)</span><span class="w">;</span></span></div><div class="code" style="left:0;top:281.0px"><span class="ln">80</span><i class="ig" style="left:67.0px;top:-1px;height:19px"></i><i class="ig" style="left:82.4px;top:-1px;height:19px"></i><i class="ig" style="left:97.8px;top:-1px;height:19px"></i><span class="cx" style="left:113.2px"><span class="c">case</span><span class="w"> </span><span class="v">taskUploadWorklogAfterStop</span><span class="w">:</span></span></div><div class="code" style="left:0;top:300.0px"><span class="ln">81</span><i class="ig" style="left:67.0px;top:-1px;height:19px"></i><i class="ig" style="left:82.4px;top:-1px;height:19px"></i><i class="ig" style="left:97.8px;top:-1px;height:19px"></i><i class="ig" style="left:113.2px;top:-1px;height:19px"></i><span class="cx" style="left:128.6px"><span class="c">try</span><span class="w"> </span><span class="b2">{</span></span></div><div class="code" style="left:0;top:319.0px"><span class="ln">82</span><i class="ig" style="left:67.0px;top:-1px;height:19px"></i><i class="ig" style="left:82.4px;top:-1px;height:19px"></i><i class="ig" style="left:97.8px;top:-1px;height:19px"></i><i class="ig" style="left:113.2px;top:-1px;height:19px"></i><i class="ig" style="left:128.6px;top:-1px;height:19px"></i><span class="cx" style="left:144.0px"><span class="c">await</span><span class="w"> </span><span class="v">syncRepository</span><span class="w">.</span><span class="f">uploadWorklogSingle</span><span class="b3">(</span><span class="v">inputData</span><span class="w">?</span><span class="b1">[</span><span class="s">'uuid'</span><span class="b1">]</span><span class="b3">)</span><span class="w">;</span></span></div><div class="code" style="left:0;top:338.0px"><span class="ln">83</span><i class="ig" style="left:67.0px;top:-1px;height:19px"></i><i class="ig" style="left:82.4px;top:-1px;height:19px"></i><i class="ig" style="left:97.8px;top:-1px;height:19px"></i><i class="ig" style="left:113.2px;top:-1px;height:19px"></i><i class="ig" style="left:128.6px;top:-1px;height:19px"></i><span class="cx" style="left:144.0px"><span class="c">return</span><span class="w"> </span><span class="ty">Future</span><span class="w">.</span><span class="f">value</span><span class="b3">(</span><span class="k">true</span><span class="b3">)</span><span class="w">;</span></span></div><div class="code" style="left:0;top:357.0px"><span class="ln">84</span><i class="ig" style="left:67.0px;top:-1px;height:19px"></i><i class="ig" style="left:82.4px;top:-1px;height:19px"></i><i class="ig" style="left:97.8px;top:-1px;height:19px"></i><i class="ig" style="left:113.2px;top:-1px;height:19px"></i><span class="cx" style="left:128.6px"><span class="b2">}</span><span class="w"> </span><span class="c">catch</span><span class="w"> </span><span class="b2">(</span><span class="v">e</span><span class="b2">)</span><span class="w"> </span><span class="b2">{</span></span></div><div class="code" style="left:0;top:376.0px"><span class="ln">85</span><i class="ig" style="left:67.0px;top:-1px;height:19px"></i><i class="ig" style="left:82.4px;top:-1px;height:19px"></i><i class="ig" style="left:97.8px;top:-1px;height:19px"></i><i class="ig" style="left:113.2px;top:-1px;height:19px"></i><i class="ig" style="left:128.6px;top:-1px;height:19px"></i><span class="cx" style="left:144.0px"><span class="c">return</span><span class="w"> </span><span class="ty">Future</span><span class="w">.</span><span class="f">value</span><span class="b3">(</span><span class="k">false</span><span class="b3">)</span><span class="w">;</span></span></div><div class="code" style="left:0;top:395.0px"><span class="ln">86</span><i class="ig" style="left:67.0px;top:-1px;height:19px"></i><i class="ig" style="left:82.4px;top:-1px;height:19px"></i><i class="ig" style="left:97.8px;top:-1px;height:19px"></i><i class="ig" style="left:113.2px;top:-1px;height:19px"></i><span class="cx" style="left:128.6px"><span class="b2">}</span></span></div><div class="code" style="left:0;top:414.0px"><span class="ln">87</span><i class="ig" style="left:67.0px;top:-1px;height:19px"></i><i class="ig" style="left:82.4px;top:-1px;height:19px"></i><i class="ig" style="left:97.8px;top:-1px;height:19px"></i><span class="cx" style="left:113.2px"><span class="c">case</span><span class="w"> </span><span class="v">taskSyncPeriodic</span><span class="w">:</span></span></div><div class="code" style="left:0;top:433.0px"><span class="ln">88</span><i class="ig" style="left:67.0px;top:-1px;height:19px"></i><i class="ig" style="left:82.4px;top:-1px;height:19px"></i><i class="ig" style="left:97.8px;top:-1px;height:19px"></i><i class="ig" style="left:113.2px;top:-1px;height:19px"></i><span class="cx" style="left:128.6px"><span class="c">try</span><span class="w"> </span><span class="b2">{</span></span></div><div class="code" style="left:0;top:452.0px"><span class="ln">89</span><i class="ig" style="left:67.0px;top:-1px;height:19px"></i><i class="ig" style="left:82.4px;top:-1px;height:19px"></i><i class="ig" style="left:97.8px;top:-1px;height:19px"></i><i class="ig" style="left:113.2px;top:-1px;height:19px"></i><i class="ig" style="left:128.6px;top:-1px;height:19px"></i><span class="cx" style="left:144.0px"><span class="c">await</span><span class="w"> </span><span class="v">syncRepository</span><span class="w">.</span><span class="f">syncPeriodic</span><span class="b3">()</span><span class="w">;</span></span></div><div class="code" style="left:0;top:471.0px"><span class="ln">90</span><i class="ig" style="left:67.0px;top:-1px;height:19px"></i><i class="ig" style="left:82.4px;top:-1px;height:19px"></i><i class="ig" style="left:97.8px;top:-1px;height:19px"></i><i class="ig" style="left:113.2px;top:-1px;height:19px"></i><i class="ig" style="left:128.6px;top:-1px;height:19px"></i><span class="cx" style="left:144.0px"><span class="c">return</span><span class="w"> </span><span class="ty">Future</span><span class="w">.</span><span class="f">value</span><span class="b3">(</span><span class="k">true</span><span class="b3">)</span><span class="w">;</span></span></div><div class="code" style="left:0;top:490.0px"><span class="ln">91</span><i class="ig" style="left:67.0px;top:-1px;height:19px"></i><i class="ig" style="left:82.4px;top:-1px;height:19px"></i><i class="ig" style="left:97.8px;top:-1px;height:19px"></i><i class="ig" style="left:113.2px;top:-1px;height:19px"></i><span class="cx" style="left:128.6px"><span class="b2">}</span><span class="w"> </span><span class="c">catch</span><span class="w"> </span><span class="b2">(</span><span class="v">e</span><span class="b2">)</span><span class="w"> </span><span class="b2">{</span></span></div><div class="code" style="left:0;top:509.0px"><span class="ln">92</span><i class="ig" style="left:67.0px;top:-1px;height:19px"></i><i class="ig" style="left:82.4px;top:-1px;height:19px"></i><i class="ig" style="left:97.8px;top:-1px;height:19px"></i><i class="ig" style="left:113.2px;top:-1px;height:19px"></i><i class="ig" style="left:128.6px;top:-1px;height:19px"></i><span class="cx" style="left:144.0px"><span class="c">return</span><span class="w"> </span><span class="ty">Future</span><span class="w">.</span><span class="f">value</span><span class="b3">(</span><span class="k">false</span><span class="b3">)</span><span class="w">;</span></span></div><div class="code" style="left:0;top:528.0px"><span class="ln">93</span><i class="ig" style="left:67.0px;top:-1px;height:19px"></i><i class="ig" style="left:82.4px;top:-1px;height:19px"></i><i class="ig" style="left:97.8px;top:-1px;height:19px"></i><i class="ig" style="left:113.2px;top:-1px;height:19px"></i><span class="cx" style="left:128.6px"><span class="b2">}</span></span></div><div class="code" style="left:0;top:547.0px"><span class="ln">94</span><i class="ig" style="left:67.0px;top:-1px;height:19px"></i><i class="ig" style="left:82.4px;top:-1px;height:19px"></i><i class="ig" style="left:97.8px;top:-1px;height:19px"></i><span class="cx" style="left:113.2px"><span class="c">case</span><span class="w"> </span><span class="v">taskUploadErrorLog</span><span class="w">:</span></span></div><div class="code" style="left:0;top:566.0px"><span class="ln">95</span><i class="ig" style="left:67.0px;top:-1px;height:19px"></i><i class="ig" style="left:82.4px;top:-1px;height:19px"></i><i class="ig" style="left:97.8px;top:-1px;height:19px"></i><i class="ig" style="left:113.2px;top:-1px;height:19px"></i><span class="cx" style="left:128.6px"><span class="c">try</span><span class="w"> </span><span class="b2">{</span></span></div><div class="code" style="left:0;top:585.0px"><span class="ln">96</span><i class="ig" style="left:67.0px;top:-1px;height:19px"></i><i class="ig" style="left:82.4px;top:-1px;height:19px"></i><i class="ig" style="left:97.8px;top:-1px;height:19px"></i><i class="ig" style="left:113.2px;top:-1px;height:19px"></i><i class="ig" style="left:128.6px;top:-1px;height:19px"></i><span class="cx" style="left:144.0px"><span class="c">await</span><span class="w"> </span><span class="v">errorLogRepository</span><span class="w">.</span><span class="f">uploadErrorLog</span><span class="b3">(</span><span class="v">inputData</span><span class="w">?</span><span class="b1">[</span><span class="s">'id'</span><span class="b1">]</span><span class="b3">)</span><span class="w">;</span></span></div><div class="code" style="left:0;top:604.0px"><span class="ln">97</span><i class="ig" style="left:67.0px;top:-1px;height:19px"></i><i class="ig" style="left:82.4px;top:-1px;height:19px"></i><i class="ig" style="left:97.8px;top:-1px;height:19px"></i><i class="ig" style="left:113.2px;top:-1px;height:19px"></i><i class="ig" style="left:128.6px;top:-1px;height:19px"></i><span class="cx" style="left:144.0px"><span class="c">return</span><span class="w"> </span><span class="ty">Future</span><span class="w">.</span><span class="f">value</span><span class="b3">(</span><span class="k">true</span><span class="b3">)</span><span class="w">;</span></span></div><div class="code" style="left:0;top:623.0px"><span class="ln">98</span><i class="ig" style="left:67.0px;top:-1px;height:19px"></i><i class="ig" style="left:82.4px;top:-1px;height:19px"></i><i class="ig" style="left:97.8px;top:-1px;height:19px"></i><i class="ig" style="left:113.2px;top:-1px;height:19px"></i><span class="cx" style="left:128.6px"><span class="b2">}</span><span class="w"> </span><span class="c">catch</span><span class="w"> </span><span class="b2">(</span><span class="v">e</span><span class="b2">)</span><span class="w"> </span><span class="b2">{</span></span></div><div class="code" style="left:0;top:642.0px"><span class="ln">99</span><i class="ig" style="left:67.0px;top:-1px;height:19px"></i><i class="ig" style="left:82.4px;top:-1px;height:19px"></i><i class="ig" style="left:97.8px;top:-1px;height:19px"></i><i class="ig" style="left:113.2px;top:-1px;height:19px"></i><i class="ig" style="left:128.6px;top:-1px;height:19px"></i><span class="cx" style="left:144.0px"><span class="c">return</span><span class="w"> </span><span class="ty">Future</span><span class="w">.</span><span class="f">value</span><span class="b3">(</span><span class="k">false</span><span class="b3">)</span><span class="w">;</span></span></div><div class="code" style="left:0;top:661.0px"><span class="ln">100</span><i class="ig" style="left:67.0px;top:-1px;height:19px"></i><i class="ig" style="left:82.4px;top:-1px;height:19px"></i><i class="ig" style="left:97.8px;top:-1px;height:19px"></i><i class="ig" style="left:113.2px;top:-1px;height:19px"></i><span class="cx" style="left:128.6px"><span class="b2">}</span></span></div><div class="code" style="left:0;top:680.0px"><span class="ln">101</span><i class="ig" style="left:67.0px;top:-1px;height:19px"></i><i class="ig" style="left:82.4px;top:-1px;height:19px"></i><span class="cx" style="left:97.8px"><span class="b1">}</span></span></div><div class="code" style="left:0;top:699.0px"><span class="ln">102</span><i class="ig" style="left:67.0px;top:-1px;height:19px"></i><i class="ig" style="left:82.4px;top:-1px;height:19px"></i><span class="cx" style="left:97.8px"><span class="cm">// print("Native called background task: $task with data $inputData"); //simpleTask will be emit</span></span></div><div class="code" style="left:0;top:718.0px"><span class="ln">103</span><i class="ig" style="left:67.0px;top:-1px;height:19px"></i><i class="ig" style="left:82.4px;top:-1px;height:19px"></i><span class="cx" style="left:97.8px"><span class="c">return</span><span class="w"> </span><span class="ty">Future</span><span class="w">.</span><span class="f">value</span><span class="b1">(</span><span class="k">true</span><span class="b1">)</span><span class="w">;</span></span></div><div class="code" style="left:0;top:737.0px"><span class="ln">104</span><i class="ig" style="left:67.0px;top:-1px;height:19px"></i><span class="cx" style="left:82.4px"><span class="b3">}</span><span class="b2">)</span><span class="w">;</span></span></div><div class="code" style="left:0;top:756.0px"><span class="ln">105</span><span class="cx" style="left:67.0px"><span class="b1">}</span></span></div><div class="code" style="left:0;top:775.0px"><span class="ln">106</span><span class="cx" style="left:67.0px"></span></div><div class="code" style="left:0;top:810.0px"><span class="ln">107</span><span class="cx" style="left:67.0px"><span class="k">void</span><span class="w"> </span><span class="f">main</span><span class="b1">()</span><span class="w"> </span><span class="c">async</span><span class="w"> </span><span class="b1">{</span></span></div><div class="code" style="left:0;top:829.0px"><span class="ln">108</span><i class="ig" style="left:67.0px;top:-1px;height:19px"></i><span class="cx" style="left:82.4px"><span class="ty">WidgetsFlutterBinding</span><span class="w">.</span><span class="f">ensureInitialized</span><span class="b2">()</span><span class="w">;</span></span></div><div class="code" style="left:0;top:848.0px"><span class="ln">109</span><i class="ig" style="left:67.0px;top:-1px;height:19px"></i><span class="cx" style="left:82.4px"></span></div><div class="code" style="left:0;top:867.0px"><span class="ln">110</span><i class="ig" style="left:67.0px;top:-1px;height:19px"></i><span class="cx" style="left:82.4px"><span class="cm">// Load .env</span></span></div><div class="code" style="left:0;top:886.0px"><span class="ln">111</span><i class="ig" style="left:67.0px;top:-1px;height:19px"></i><span class="cx" style="left:82.4px"><span class="c">await</span><span class="w"> </span><span class="v">dotenv</span><span class="w">.</span><span class="f">load</span><span class="b2">(</span><span class="v">fileName</span><span class="w">: </span><span class="s">".env"</span><span class="b2">)</span><span class="w">;</span></span></div><div class="t" style="left:67.00px;top:797.35px;font-size:12.00px;color:#999;letter-spacing:-0.137px;">Run | Debug | Profile | Codeium: Refactor | Explain | Generate Function Comment | </div><svg style="left:502.00px;top:798.50px;" width="9" height="9" viewBox="0 0 9 9"><path d="M0.5,0.5 L8.5,8.5 M8.5,0.5 L0.5,8.5" stroke="#999" stroke-width="1"/></svg></div><div class="a" style="left:345.00px;top:92.00px;width:842.00px;height:19.50px;background:#000;"></div><div class="code" style="top:92.5px"><span class="ln">57</span><span class="cx"><span class="k">void</span><span class="w"> </span><span class="f">callbackDispatcher</span><span class="b1">()</span><span class="w"> </span><span class="c">async</span><span class="w"> </span><span class="b1">{</span></span></div><div class="hl" style="left:345px;top:111px;width:835px"></div>
<div class="a" style="left:1186px;top:92px;width:101px;height:919px;overflow:hidden"><svg style="left:-1186px;top:-92px" width="1300" height="1012" viewBox="0 0 1300 1012"><path d="M1187.0,93.0h6.5M1187.0,95.0h6.5M1187.0,97.0h6.5M1187.0,99.0h6.5M1187.0,101.0h6.5M1187.0,103.0h6.5M1187.0,105.0h6.5M1187.0,107.0h6.5M1187.0,109.0h6.5M1187.0,111.0h6.5M1187.0,113.0h6.5M1187.0,115.0h6.5M1187.0,117.0h6.5M1187.0,119.0h6.5M1187.0,121.0h6.5M1187.0,123.0h6.5M1187.0,125.0h6.5M1187.0,127.0h6.5M1187.0,129.0h6.5M1187.0,131.0h6.5M1187.0,133.0h6.5M1187.0,135.0h6.5M1187.0,137.0h6.5M1187.0,139.0h6.5M1187.0,141.0h6.5M1187.0,143.0h6.5M1187.0,145.0h6.5M1187.0,147.0h6.5M1187.0,149.0h6.5M1187.0,151.0h6.5M1187.0,153.0h6.5M1187.0,155.0h6.5M1187.0,157.0h6.5M1187.0,159.0h6.5M1187.0,161.0h6.5M1187.0,163.0h6.5M1187.0,165.0h6.5M1187.0,167.0h6.5M1187.0,169.0h6.5M1187.0,171.0h6.5M1187.0,173.0h6.5M1187.0,175.0h6.5M1187.0,177.0h6.5M1187.0,179.0h6.5M1187.0,181.0h6.5M1187.0,183.0h6.5M1187.0,185.0h6.5M1187.0,187.0h6.5M1187.0,189.0h6.5M1187.0,191.0h6.5M1187.0,193.0h6.5M1187.0,195.0h6.5M1187.0,197.0h6.5M1210.8,197.0h2.2M1187.0,205.0h4.3M1191.3,217.0h5.4M1206.4,239.0h4.3M1191.3,241.0h5.4M1191.3,243.0h5.4M1217.2,249.0h4.3M1219.4,257.0h4.3M1219.4,261.0h5.4M1219.4,271.0h4.3M1219.4,275.0h5.4M1219.4,285.0h4.3M1219.4,289.0h5.4M1212.9,297.0h4.3M1187.0,305.0h4.3M1189.2,319.0h5.4M1204.3,341.0h4.3M1209.7,351.0h5.4M1187.0,369.0h5.4M1195.6,373.0h6.5M1197.8,379.0h6.5M1198.9,381.0h8.6M1204.3,385.0h8.6M1191.3,391.0h5.4M1193.5,401.0h5.4M1203.2,403.0h3.2M1204.3,405.0h5.4M1206.4,413.0h7.6M1201.0,417.0h4.3M1202.1,423.0h4.3M1191.3,431.0h5.4M1202.1,433.0h3.2M1189.2,439.0h5.4M1189.2,441.0h5.4M1200.0,447.0h4.3M1203.2,481.0h6.5M1201.0,487.0h8.6M1202.1,493.0h8.6M1205.4,497.0h6.5M1204.3,501.0h7.6M1206.4,503.0h3.2M1195.6,507.0h5.4M1202.1,523.0h6.5M1211.8,537.0h5.4M1202.1,555.0h4.3M1196.7,571.0h7.6M1187.0,583.0h5.4M1200.0,583.0h7.6M1198.9,631.0h8.6M1191.3,639.0h5.4M1189.2,641.0h5.4M1189.2,643.0h5.4M1189.2,653.0h5.4M1189.2,657.0h5.4M1189.2,663.0h5.4" stroke="#3a6690" stroke-width="1.05" stroke-dasharray="2.4 .7" opacity=".8" fill="none"/><path d="M1215.1,205.0h5.4M1236.7,207.0h5.4M1191.3,211.0h5.4M1204.3,217.0h5.4M1191.3,219.0h5.4M1191.3,245.0h6.5M1193.5,247.0h4.3M1195.6,249.0h6.5M1193.5,251.0h4.3M1195.6,253.0h3.2M1197.8,255.0h5.4M1197.8,257.0h6.5M1197.8,259.0h5.4M1197.8,261.0h6.5M1193.5,265.0h4.3M1195.6,267.0h3.2M1197.8,269.0h5.4M1197.8,271.0h6.5M1197.8,273.0h5.4M1197.8,275.0h6.5M1193.5,279.0h4.3M1195.6,281.0h3.2M1197.8,283.0h5.4M1197.8,285.0h6.5M1197.8,287.0h5.4M1197.8,289.0h6.5M1191.3,297.0h6.5M1200.0,305.0h5.4M1189.2,313.0h5.4M1202.1,319.0h5.4M1189.2,321.0h5.4M1189.2,375.0h6.5M1189.2,377.0h6.5M1191.3,395.0h6.5M1191.3,437.0h6.5M1191.3,459.0h6.5M1189.2,465.0h6.5M1193.5,495.0h6.5M1195.6,525.0h6.5M1197.8,527.0h6.5M1195.6,543.0h6.5M1195.6,551.0h6.5M1193.5,557.0h6.5M1189.2,645.0h6.5" stroke="#80577d" stroke-width="1.05" stroke-dasharray="2.4 .7" opacity=".8" fill="none"/><path d="M1192.4,205.0h19.4M1204.3,207.0h11.9M1205.4,211.0h4.3M1210.8,217.0h34.6M1203.2,219.0h4.3M1210.8,249.0h5.4M1220.5,255.0h20.5M1212.9,257.0h5.4M1212.9,261.0h5.4M1220.5,269.0h13.0M1212.9,271.0h5.4M1212.9,275.0h5.4M1224.8,283.0h15.1M1212.9,285.0h5.4M1212.9,289.0h5.4M1206.4,297.0h5.4M1192.4,305.0h4.3M1212.9,307.0h18.4M1203.2,313.0h4.3M1208.6,319.0h34.6M1201.0,321.0h4.3M1204.3,347.0h10.8M1193.5,349.0h19.4M1204.3,357.0h21.6M1189.2,363.0h6.5M1208.6,371.0h9.7M1201.0,393.0h9.7M1206.4,409.0h8.6M1207.5,411.0h5.4M1209.7,415.0h7.6M1198.9,421.0h8.6M1206.4,425.0h7.6M1212.9,457.0h6.5M1205.4,461.0h3.2M1201.0,475.0h4.3M1205.4,479.0h5.4M1201.0,491.0h7.6M1207.5,511.0h9.7M1210.8,515.0h7.6M1201.0,521.0h6.5M1217.2,529.0h3.2M1209.7,531.0h8.6M1212.9,533.0h7.6M1210.8,535.0h9.7M1215.1,545.0h8.6M1205.4,549.0h8.6M1209.7,553.0h4.3M1197.8,561.0h7.6M1212.9,563.0h4.3M1200.0,567.0h9.7M1198.9,577.0h6.5M1196.7,629.0h9.7M1211.8,647.0h8.6M1210.8,651.0h3.2M1202.1,655.0h8.6M1200.0,659.0h7.6M1198.9,665.0h5.4" stroke="#8f8f6f" stroke-width="1.05" stroke-dasharray="2.4 .7" opacity=".8" fill="none"/><path d="M1187.0,201.0h7.6M1189.2,207.0h11.9M1197.8,219.0h4.3M1197.8,241.0h15.1M1232.4,241.0h15.1M1197.8,243.0h19.4M1241.0,243.0h19.4M1203.2,249.0h6.5M1205.4,257.0h6.5M1205.4,261.0h6.5M1205.4,271.0h6.5M1205.4,275.0h6.5M1205.4,285.0h6.5M1205.4,289.0h6.5M1198.9,297.0h6.5M1189.2,307.0h22.7M1195.6,321.0h4.3M1189.2,347.0h11.9M1189.2,357.0h11.9M1205.4,359.0h8.6M1196.7,363.0h14.0M1219.4,363.0h5.4M1204.3,369.0h8.6M1198.9,371.0h8.6M1196.7,375.0h6.5M1196.7,377.0h11.9M1207.5,391.0h13.0M1191.3,393.0h8.6M1211.8,393.0h13.0M1198.9,395.0h6.5M1216.2,401.0h10.8M1197.8,409.0h7.6M1216.2,409.0h6.5M1195.6,411.0h10.8M1214.0,411.0h13.0M1201.0,415.0h7.6M1191.3,421.0h6.5M1208.6,421.0h13.0M1198.9,425.0h6.5M1206.4,431.0h7.6M1198.9,437.0h5.4M1211.8,439.0h8.6M1204.3,441.0h6.5M1205.4,457.0h6.5M1198.9,459.0h7.6M1195.6,461.0h8.6M1196.7,465.0h11.9M1193.5,475.0h6.5M1206.4,475.0h13.0M1195.6,479.0h8.6M1211.8,479.0h9.7M1189.2,491.0h10.8M1209.7,491.0h5.4M1201.0,495.0h10.8M1216.2,507.0h15.1M1195.6,511.0h10.8M1218.3,511.0h7.6M1200.0,515.0h9.7M1191.3,521.0h8.6M1208.6,521.0h9.7M1203.2,525.0h11.9M1205.4,527.0h9.7M1207.5,529.0h8.6M1200.0,531.0h8.6M1219.4,531.0h11.9M1202.1,533.0h9.7M1221.6,533.0h8.6M1200.0,535.0h9.7M1221.6,535.0h5.4M1203.2,543.0h13.0M1204.3,545.0h9.7M1197.8,549.0h6.5M1215.1,549.0h13.0M1203.2,551.0h5.4M1204.3,553.0h4.3M1201.0,557.0h11.9M1191.3,561.0h5.4M1206.4,561.0h6.5M1205.4,563.0h6.5M1191.3,567.0h7.6M1210.8,567.0h7.6M1189.2,577.0h8.6M1206.4,577.0h10.8M1193.5,583.0h5.4M1208.6,583.0h15.1M1191.3,585.0h9.7M1230.2,585.0h11.9M1191.3,587.0h9.7M1230.2,587.0h14.0M1191.3,589.0h9.7M1230.2,589.0h20.5M1191.3,591.0h9.7M1230.2,591.0h23.8M1191.3,593.0h9.7M1230.2,593.0h20.5M1191.3,595.0h9.7M1230.2,595.0h23.8M1191.3,597.0h9.7M1230.2,597.0h9.7M1191.3,599.0h9.7M1230.2,599.0h23.8M1191.3,601.0h9.7M1230.2,601.0h9.7M1191.3,603.0h9.7M1230.2,603.0h17.3M1191.3,605.0h9.7M1230.2,605.0h8.6M1191.3,607.0h9.7M1230.2,607.0h18.4M1191.3,609.0h9.7M1230.2,609.0h22.7M1191.3,611.0h9.7M1230.2,611.0h8.6M1191.3,613.0h9.7M1230.2,613.0h13.0M1191.3,615.0h9.7M1230.2,615.0h17.3M1191.3,617.0h9.7M1230.2,617.0h13.0M1191.3,619.0h9.7M1230.2,619.0h14.0M1191.3,621.0h9.7M1230.2,621.0h10.8M1191.3,623.0h9.7M1230.2,623.0h22.7M1191.3,625.0h9.7M1230.2,625.0h22.7M1191.3,627.0h9.7M1230.2,627.0h18.4M1189.2,629.0h6.5M1207.5,629.0h7.6M1208.6,639.0h6.5M1210.8,641.0h14.0M1205.4,643.0h6.5M1196.7,645.0h6.5M1204.3,647.0h6.5M1201.0,651.0h8.6M1209.7,653.0h11.9M1191.3,655.0h9.7M1211.8,655.0h6.5M1211.8,657.0h11.9M1189.2,659.0h9.7M1208.6,659.0h5.4M1204.3,663.0h11.9M1189.2,665.0h8.6M1205.4,665.0h11.9" stroke="#347f70" stroke-width="1.05" stroke-dasharray="2.4 .7" opacity=".8" fill="none"/><path d="M1214.0,197.0h4.3M1218.3,207.0h4.3M1224.8,207.0h9.7M1197.8,211.0h6.5M1210.8,211.0h8.6M1197.8,217.0h3.2M1193.5,221.0h15.1M1193.5,223.0h22.7M1193.5,225.0h16.2M1193.5,227.0h10.8M1193.5,229.0h28.1M1193.5,231.0h25.9M1193.5,233.0h22.7M1193.5,235.0h22.7M1193.5,237.0h15.1M1194.6,239.0h9.7M1212.9,239.0h9.7M1224.8,239.0h3.2M1229.1,239.0h4.3M1214.0,241.0h15.1M1218.3,243.0h19.4M1200.0,245.0h4.3M1198.9,247.0h14.0M1198.9,251.0h28.1M1204.3,255.0h15.1M1242.1,255.0h9.7M1205.4,259.0h1.1M1198.9,265.0h17.3M1204.3,269.0h15.1M1205.4,273.0h1.1M1198.9,279.0h19.4M1204.3,283.0h19.4M1241.0,283.0h9.7M1205.4,287.0h1.1M1195.6,313.0h6.5M1208.6,313.0h8.6M1195.6,319.0h3.2M1191.3,323.0h15.1M1191.3,325.0h22.7M1191.3,327.0h16.2M1191.3,329.0h10.8M1191.3,331.0h28.1M1191.3,333.0h25.9M1191.3,335.0h22.7M1191.3,337.0h22.7M1191.3,339.0h15.1M1192.4,341.0h9.7M1210.8,341.0h9.7M1222.6,341.0h8.6M1193.5,351.0h14.0M1227.0,357.0h17.3M1246.4,357.0h17.3M1193.5,359.0h9.7M1215.1,359.0h7.6M1211.8,363.0h5.4M1193.5,369.0h7.6M1214.0,369.0h16.2M1237.8,369.0h6.5M1189.2,371.0h7.6M1189.2,373.0h4.3M1189.2,379.0h6.5M1191.3,381.0h5.4M1193.5,385.0h8.6M1197.8,391.0h6.5M1221.6,391.0h8.6M1225.9,393.0h6.5M1200.0,401.0h13.0M1228.0,401.0h4.3M1193.5,403.0h7.6M1195.6,405.0h6.5M1223.7,409.0h3.2M1228.0,411.0h4.3M1195.6,413.0h8.6M1193.5,415.0h5.4M1191.3,417.0h7.6M1222.6,421.0h3.2M1191.3,423.0h8.6M1191.3,425.0h5.4M1197.8,431.0h5.4M1215.1,431.0h10.8M1191.3,433.0h8.6M1195.6,439.0h13.0M1221.6,439.0h4.3M1195.6,441.0h5.4M1211.8,441.0h7.6M1191.3,447.0h6.5M1193.5,457.0h9.7M1189.2,461.0h4.3M1220.5,475.0h3.2M1222.6,479.0h8.6M1195.6,481.0h5.4M1191.3,487.0h7.6M1216.2,491.0h6.5M1191.3,493.0h8.6M1195.6,497.0h7.6M1197.8,501.0h4.3M1195.6,503.0h8.6M1202.1,507.0h10.8M1232.4,507.0h5.4M1227.0,511.0h6.5M1191.3,515.0h6.5M1219.4,521.0h5.4M1193.5,523.0h6.5M1197.8,529.0h7.6M1232.4,531.0h3.2M1231.3,533.0h8.6M1228.0,535.0h7.6M1200.0,537.0h9.7M1197.8,545.0h4.3M1229.1,549.0h5.4M1195.6,553.0h6.5M1195.6,555.0h4.3M1214.0,561.0h6.5M1193.5,563.0h9.7M1219.4,567.0h8.6M1189.2,571.0h5.4M1218.3,577.0h8.6M1242.1,585.0h7.6M1244.2,587.0h10.8M1250.7,589.0h5.4M1254.0,591.0h17.3M1250.7,593.0h4.3M1254.0,595.0h2.2M1239.9,597.0h3.2M1254.0,599.0h9.7M1239.9,601.0h15.1M1247.5,603.0h16.2M1238.8,605.0h5.4M1248.6,607.0h14.0M1252.9,609.0h16.2M1238.8,611.0h11.9M1243.2,613.0h13.0M1247.5,615.0h13.0M1243.2,617.0h8.6M1244.2,619.0h10.8M1241.0,621.0h10.8M1252.9,623.0h6.5M1252.9,625.0h4.3M1248.6,627.0h14.0M1216.2,629.0h3.2M1189.2,631.0h7.6M1197.8,639.0h7.6M1216.2,639.0h3.2M1195.6,641.0h11.9M1225.9,641.0h3.2M1195.6,643.0h6.5M1212.9,643.0h7.6M1191.3,647.0h10.8M1191.3,651.0h7.6M1195.6,653.0h10.8M1222.6,653.0h10.8M1219.4,655.0h3.2M1195.6,657.0h13.0M1224.8,657.0h9.7M1215.1,659.0h4.3M1195.6,663.0h5.4M1217.2,663.0h6.5M1218.3,665.0h3.2" stroke="#5f8ba0" stroke-width="1.05" stroke-dasharray="2.4 .7" opacity=".8" fill="none"/><path d="M1194.6,93.0h38.9M1194.6,95.0h32.4M1194.6,97.0h38.9M1194.6,99.0h54.0M1194.6,101.0h75.6M1194.6,103.0h51.8M1194.6,105.0h47.5M1194.6,107.0h62.6M1194.6,109.0h71.3M1194.6,111.0h67.0M1194.6,113.0h79.9M1194.6,115.0h75.6M1194.6,117.0h62.6M1194.6,119.0h47.5M1194.6,121.0h43.2M1194.6,123.0h67.0M1194.6,125.0h56.2M1194.6,127.0h47.5M1194.6,129.0h43.2M1194.6,131.0h71.3M1194.6,133.0h62.6M1194.6,135.0h84.2M1194.6,137.0h79.9M1194.6,139.0h36.7M1194.6,141.0h75.6M1194.6,143.0h64.8M1194.6,145.0h67.0M1194.6,147.0h79.9M1194.6,149.0h84.2M1194.6,151.0h75.6M1194.6,153.0h79.9M1194.6,155.0h47.5M1194.6,157.0h75.6M1194.6,159.0h36.7M1194.6,161.0h54.0M1194.6,163.0h71.3M1194.6,165.0h43.2M1194.6,167.0h36.7M1194.6,169.0h36.7M1194.6,171.0h51.8M1194.6,173.0h51.8M1194.6,175.0h75.6M1194.6,177.0h36.7M1194.6,179.0h62.6M1194.6,181.0h67.0M1194.6,183.0h60.5M1194.6,185.0h67.0M1194.6,187.0h75.6M1194.6,189.0h54.0M1194.6,191.0h51.8M1194.6,193.0h71.3M1194.6,195.0h51.8M1194.6,197.0h15.1M1221.6,211.0h6.5M1254.0,255.0h6.5M1252.9,283.0h4.3M1219.4,313.0h6.5M1224.8,359.0h2.2M1232.4,369.0h3.2M1219.4,371.0h5.4M1218.3,415.0h5.4M1215.1,425.0h9.7M1220.5,457.0h11.9M1209.7,461.0h10.8M1219.4,515.0h19.4M1221.6,529.0h13.0M1224.8,545.0h17.3M1215.1,553.0h16.2M1218.3,563.0h6.5M1221.6,647.0h15.1M1215.1,651.0h10.8" stroke="#9a684f" stroke-width="1.05" stroke-dasharray="2.4 .7" opacity=".8" fill="none"/><path d="M1187.0,203.0h78.8M1191.3,209.0h13.0M1191.3,215.0h13.0M1191.3,295.0h103.7M1189.2,311.0h13.0M1189.2,317.0h13.0M1189.2,345.0h20.5M1215.1,349.0h52.9M1216.2,351.0h71.3M1189.2,355.0h31.3M1193.5,383.0h31.3M1189.2,435.0h32.4M1189.2,445.0h33.5M1189.2,453.0h35.6M1189.2,467.0h32.4M1191.3,469.0h35.6M1193.5,473.0h18.4M1193.5,509.0h28.1M1191.3,517.0h27.0M1197.8,547.0h33.5M1193.5,565.0h25.9M1189.2,569.0h16.2M1187.0,581.0h42.1M1191.3,633.0h23.8M1191.3,635.0h19.4" stroke="#4f6b43" stroke-width="1.05" stroke-dasharray="2.4 .7" opacity=".8" fill="none"/><path d="M1233.4,93.0h1.1M1227.0,95.0h1.1M1233.4,97.0h1.1M1248.6,99.0h1.1M1270.2,101.0h1.1M1246.4,103.0h1.1M1242.1,105.0h1.1M1257.2,107.0h1.1M1265.8,109.0h1.1M1261.5,111.0h1.1M1274.5,113.0h1.1M1270.2,115.0h1.1M1257.2,117.0h1.1M1242.1,119.0h1.1M1237.8,121.0h1.1M1261.5,123.0h1.1M1250.7,125.0h1.1M1242.1,127.0h1.1M1237.8,129.0h1.1M1265.8,131.0h1.1M1257.2,133.0h1.1M1278.8,135.0h1.1M1274.5,137.0h1.1M1231.3,139.0h1.1M1270.2,141.0h1.1M1259.4,143.0h1.1M1261.5,145.0h1.1M1274.5,147.0h1.1M1278.8,149.0h1.1M1270.2,151.0h1.1M1274.5,153.0h1.1M1242.1,155.0h1.1M1270.2,157.0h1.1M1231.3,159.0h1.1M1248.6,161.0h1.1M1265.8,163.0h1.1M1237.8,165.0h1.1M1231.3,167.0h1.1M1231.3,169.0h1.1M1246.4,171.0h1.1M1246.4,173.0h1.1M1270.2,175.0h1.1M1231.3,177.0h1.1M1257.2,179.0h1.1M1261.5,181.0h1.1M1255.0,183.0h1.1M1261.5,185.0h1.1M1270.2,187.0h1.1M1248.6,189.0h1.1M1246.4,191.0h1.1M1265.8,193.0h1.1M1246.4,195.0h1.1M1218.3,197.0h1.1M1203.2,207.0h1.1M1222.6,207.0h1.1M1204.3,211.0h1.1M1219.4,211.0h1.1M1228.0,211.0h2.2M1202.1,217.0h1.1M1245.3,217.0h3.2M1202.1,219.0h1.1M1208.6,221.0h1.1M1216.2,223.0h1.1M1209.7,225.0h1.1M1204.3,227.0h1.1M1221.6,229.0h1.1M1219.4,231.0h1.1M1216.2,233.0h1.1M1216.2,235.0h1.1M1192.4,239.0h1.1M1204.3,239.0h1.1M1210.8,239.0h1.1M1222.6,239.0h1.1M1228.0,239.0h1.1M1234.5,239.0h1.1M1230.2,241.0h1.1M1249.6,241.0h1.1M1238.8,243.0h1.1M1262.6,243.0h1.1M1212.9,247.0h1.1M1209.7,249.0h1.1M1222.6,249.0h1.1M1227.0,251.0h1.1M1219.4,255.0h1.1M1251.8,255.0h1.1M1262.6,255.0h1.1M1211.8,257.0h1.1M1224.8,257.0h1.1M1211.8,261.0h1.1M1225.9,261.0h1.1M1216.2,265.0h1.1M1219.4,269.0h1.1M1235.6,269.0h1.1M1211.8,271.0h1.1M1224.8,271.0h1.1M1211.8,275.0h1.1M1225.9,275.0h1.1M1218.3,279.0h1.1M1223.7,283.0h1.1M1250.7,283.0h1.1M1259.4,283.0h1.1M1211.8,285.0h1.1M1224.8,285.0h1.1M1211.8,289.0h1.1M1225.9,289.0h1.1M1205.4,297.0h1.1M1218.3,297.0h1.1M1191.3,299.0h1.1M1211.8,307.0h1.1M1233.4,307.0h1.1M1202.1,313.0h1.1M1217.2,313.0h1.1M1227.0,313.0h1.1M1200.0,319.0h1.1M1243.2,319.0h3.2M1200.0,321.0h1.1M1206.4,323.0h1.1M1214.0,325.0h1.1M1207.5,327.0h1.1M1202.1,329.0h1.1M1219.4,331.0h1.1M1217.2,333.0h1.1M1214.0,335.0h1.1M1214.0,337.0h1.1M1206.4,339.0h1.1M1189.2,341.0h2.2M1202.1,341.0h1.1M1208.6,341.0h1.1M1220.5,341.0h1.1M1231.3,341.0h2.2M1203.2,347.0h1.1M1215.1,347.0h1.1M1212.9,349.0h1.1M1207.5,351.0h1.1M1193.5,353.0h2.2M1203.2,357.0h1.1M1225.9,357.0h1.1M1244.2,357.0h1.1M1263.7,357.0h1.1M1203.2,359.0h1.1M1214.0,359.0h1.1M1222.6,359.0h1.1M1227.0,359.0h3.2M1195.6,363.0h1.1M1210.8,363.0h1.1M1217.2,363.0h1.1M1224.8,363.0h5.4M1202.1,369.0h1.1M1212.9,369.0h1.1M1230.2,369.0h1.1M1235.6,369.0h1.1M1244.2,369.0h3.2M1196.7,371.0h1.1M1207.5,371.0h1.1M1218.3,371.0h1.1M1224.8,371.0h2.2M1193.5,373.0h1.1M1202.1,373.0h1.1M1203.2,375.0h1.1M1208.6,377.0h1.1M1195.6,379.0h1.1M1204.3,379.0h1.1M1196.7,381.0h1.1M1207.5,381.0h1.1M1202.1,385.0h1.1M1212.9,385.0h1.1M1193.5,387.0h2.2M1193.5,389.0h1.1M1205.4,391.0h1.1M1220.5,391.0h1.1M1230.2,391.0h2.2M1210.8,393.0h1.1M1232.4,393.0h3.2M1205.4,395.0h1.1M1191.3,397.0h2.2M1193.5,399.0h2.2M1214.0,401.0h1.1M1227.0,401.0h1.1M1232.4,401.0h2.2M1201.0,403.0h1.1M1206.4,403.0h1.1M1202.1,405.0h1.1M1209.7,405.0h1.1M1197.8,407.0h2.2M1215.1,409.0h1.1M1227.0,409.0h3.2M1212.9,411.0h1.1M1232.4,411.0h3.2M1204.3,413.0h1.1M1214.0,413.0h1.1M1198.9,415.0h1.1M1208.6,415.0h1.1M1217.2,415.0h1.1M1223.7,415.0h2.2M1198.9,417.0h1.1M1205.4,417.0h1.1M1207.5,421.0h1.1M1225.9,421.0h3.2M1200.0,423.0h1.1M1206.4,423.0h1.1M1196.7,425.0h1.1M1205.4,425.0h1.1M1214.0,425.0h1.1M1224.8,425.0h2.2M1193.5,427.0h2.2M1191.3,429.0h1.1M1204.3,431.0h1.1M1214.0,431.0h1.1M1225.9,431.0h2.2M1200.0,433.0h1.1M1205.4,433.0h1.1M1204.3,437.0h1.1M1209.7,439.0h1.1M1220.5,439.0h1.1M1225.9,439.0h2.2M1202.1,441.0h1.1M1210.8,441.0h1.1M1219.4,441.0h2.2M1189.2,443.0h1.1M1197.8,447.0h1.1M1204.3,447.0h1.1M1189.2,449.0h1.1M1189.2,451.0h1.1M1203.2,457.0h1.1M1211.8,457.0h1.1M1219.4,457.0h1.1M1232.4,457.0h2.2M1206.4,459.0h1.1M1193.5,461.0h1.1M1204.3,461.0h1.1M1208.6,461.0h1.1M1220.5,461.0h2.2M1189.2,463.0h1.1M1208.6,465.0h1.1M1193.5,471.0h2.2M1205.4,475.0h1.1M1223.7,475.0h3.2M1210.8,479.0h1.1M1231.3,479.0h3.2M1201.0,481.0h1.1M1209.7,481.0h1.1M1195.6,483.0h1.1M1198.9,487.0h1.1M1209.7,487.0h1.1M1189.2,489.0h1.1M1208.6,491.0h1.1M1222.6,491.0h3.2M1200.0,493.0h1.1M1210.8,493.0h1.1M1211.8,495.0h1.1M1203.2,497.0h1.1M1211.8,497.0h1.1M1195.6,499.0h2.2M1202.1,501.0h1.1M1211.8,501.0h1.1M1204.3,503.0h1.1M1209.7,503.0h1.1M1193.5,505.0h1.1M1214.0,507.0h1.1M1231.3,507.0h1.1M1237.8,507.0h2.2M1217.2,511.0h1.1M1233.4,511.0h3.2M1193.5,513.0h2.2M1197.8,515.0h1.1M1209.7,515.0h1.1M1218.3,515.0h1.1M1238.8,515.0h2.2M1189.2,519.0h1.1M1207.5,521.0h1.1M1224.8,521.0h3.2M1200.0,523.0h1.1M1208.6,523.0h1.1M1215.1,525.0h1.1M1215.1,527.0h1.1M1205.4,529.0h1.1M1216.2,529.0h1.1M1220.5,529.0h1.1M1234.5,529.0h2.2M1218.3,531.0h1.1M1235.6,531.0h3.2M1220.5,533.0h1.1M1239.9,533.0h3.2M1220.5,535.0h1.1M1235.6,535.0h3.2M1209.7,537.0h1.1M1217.2,537.0h1.1M1197.8,541.0h2.2M1216.2,543.0h1.1M1202.1,545.0h1.1M1214.0,545.0h1.1M1223.7,545.0h1.1M1242.1,545.0h2.2M1214.0,549.0h1.1M1234.5,549.0h3.2M1208.6,551.0h1.1M1202.1,553.0h1.1M1208.6,553.0h1.1M1214.0,553.0h1.1M1231.3,553.0h2.2M1200.0,555.0h1.1M1206.4,555.0h1.1M1212.9,557.0h1.1M1191.3,559.0h1.1M1205.4,561.0h1.1M1220.5,561.0h3.2M1203.2,563.0h1.1M1211.8,563.0h1.1M1217.2,563.0h1.1M1224.8,563.0h2.2M1209.7,567.0h1.1M1228.0,567.0h3.2M1194.6,571.0h1.1M1204.3,571.0h1.1M1189.2,575.0h2.2M1205.4,577.0h1.1M1227.0,577.0h3.2M1224.8,583.0h1.1M1211.8,585.0h8.6M1221.6,585.0h7.6M1211.8,587.0h8.6M1221.6,587.0h7.6M1211.8,589.0h8.6M1221.6,589.0h7.6M1211.8,591.0h8.6M1221.6,591.0h7.6M1211.8,593.0h8.6M1221.6,593.0h7.6M1211.8,595.0h8.6M1221.6,595.0h7.6M1211.8,597.0h8.6M1221.6,597.0h7.6M1211.8,599.0h8.6M1221.6,599.0h7.6M1211.8,601.0h8.6M1221.6,601.0h7.6M1211.8,603.0h8.6M1221.6,603.0h7.6M1211.8,605.0h8.6M1221.6,605.0h7.6M1211.8,607.0h8.6M1221.6,607.0h7.6M1211.8,609.0h8.6M1221.6,609.0h7.6M1211.8,611.0h8.6M1221.6,611.0h7.6M1211.8,613.0h8.6M1221.6,613.0h7.6M1211.8,615.0h8.6M1221.6,615.0h7.6M1211.8,617.0h8.6M1221.6,617.0h7.6M1211.8,619.0h8.6M1221.6,619.0h7.6M1211.8,621.0h8.6M1221.6,621.0h7.6M1211.8,623.0h8.6M1221.6,623.0h7.6M1211.8,625.0h8.6M1221.6,625.0h7.6M1211.8,627.0h8.6M1221.6,627.0h7.6M1206.4,629.0h1.1M1219.4,629.0h3.2M1196.7,631.0h1.1M1207.5,631.0h1.1M1193.5,637.0h1.1M1206.4,639.0h1.1M1215.1,639.0h1.1M1219.4,639.0h2.2M1208.6,641.0h1.1M1224.8,641.0h1.1M1229.1,641.0h2.2M1203.2,643.0h1.1M1211.8,643.0h1.1M1220.5,643.0h2.2M1203.2,645.0h1.1M1202.1,647.0h1.1M1210.8,647.0h1.1M1220.5,647.0h1.1M1236.7,647.0h2.2M1193.5,649.0h2.2M1198.9,651.0h1.1M1209.7,651.0h1.1M1214.0,651.0h1.1M1225.9,651.0h2.2M1207.5,653.0h1.1M1221.6,653.0h1.1M1233.4,653.0h2.2M1210.8,655.0h1.1M1222.6,655.0h3.2M1209.7,657.0h1.1M1223.7,657.0h1.1M1234.5,657.0h2.2M1207.5,659.0h1.1M1219.4,659.0h3.2M1191.3,661.0h2.2M1202.1,663.0h1.1M1216.2,663.0h1.1M1223.7,663.0h2.2M1204.3,665.0h1.1M1221.6,665.0h3.2M1189.2,667.0h2.2" stroke="#8c8c8c" stroke-width="1.05" stroke-dasharray="2.4 .7" opacity=".8" fill="none"/><path d="M1211.8,205.0h2.2M1221.6,205.0h1.1M1209.7,211.0h1.1M1207.5,219.0h2.2M1233.4,239.0h1.1M1247.5,241.0h2.2M1260.4,243.0h2.2M1198.9,245.0h1.1M1204.3,245.0h1.1M1206.4,245.0h1.1M1252.9,255.0h1.1M1260.4,255.0h1.1M1251.8,283.0h1.1M1257.2,283.0h1.1M1191.3,293.0h1.1M1211.8,297.0h1.1M1217.2,297.0h1.1M1187.0,301.0h1.1M1196.7,305.0h2.2M1206.4,305.0h1.1M1205.4,321.0h2.2M1187.0,365.0h1.1" stroke="#9a8400" stroke-width="1.05" stroke-dasharray="2.4 .7" opacity=".8" fill="none"/><path d="M1201.0,207.0h2.2M1216.2,207.0h2.2M1191.3,239.0h1.1M1216.2,249.0h1.1M1221.6,249.0h1.1M1200.0,253.0h1.1M1195.6,259.0h1.1M1204.3,259.0h1.1M1206.4,259.0h1.1M1208.6,259.0h1.1M1195.6,263.0h1.1M1200.0,267.0h1.1M1195.6,273.0h1.1M1204.3,273.0h1.1M1206.4,273.0h1.1M1208.6,273.0h1.1M1195.6,277.0h1.1M1200.0,281.0h1.1M1195.6,287.0h1.1M1204.3,287.0h1.1M1206.4,287.0h1.1M1208.6,287.0h1.1M1195.6,291.0h1.1M1190.2,299.0h1.1M1231.3,307.0h2.2M1207.5,313.0h1.1M1225.9,313.0h1.1M1201.0,347.0h2.2M1201.0,357.0h2.2" stroke="#874585" stroke-width="1.05" stroke-dasharray="2.4 .7" opacity=".8" fill="none"/><path d="M1234.5,207.0h1.1M1243.2,207.0h1.1M1241.0,255.0h1.1M1261.5,255.0h1.1M1218.3,257.0h1.1M1223.7,257.0h1.1M1218.3,261.0h1.1M1224.8,261.0h1.1M1233.4,269.0h2.2M1218.3,271.0h1.1M1223.7,271.0h1.1M1218.3,275.0h1.1M1224.8,275.0h1.1M1239.9,283.0h1.1M1258.3,283.0h1.1M1218.3,285.0h1.1M1223.7,285.0h1.1M1218.3,289.0h1.1M1224.8,289.0h1.1M1189.2,299.0h1.1M1202.1,585.0h8.6M1202.1,587.0h8.6M1202.1,589.0h8.6M1202.1,591.0h8.6M1202.1,593.0h8.6M1202.1,595.0h8.6M1202.1,597.0h8.6M1202.1,599.0h8.6M1202.1,601.0h8.6M1202.1,603.0h8.6M1202.1,605.0h8.6M1202.1,607.0h8.6M1202.1,609.0h8.6M1202.1,611.0h8.6M1202.1,613.0h8.6M1202.1,615.0h8.6M1202.1,617.0h8.6M1202.1,619.0h8.6M1202.1,621.0h8.6M1202.1,623.0h8.6M1202.1,625.0h8.6M1202.1,627.0h8.6" stroke="#55809a" stroke-width="1.05" stroke-dasharray="2.4 .7" opacity=".8" fill="none"/></svg></div><div class="a" style="left:1287.00px;top:92.00px;width:1.00px;height:919.00px;background:#2a2a2a;"></div><div class="a" style="left:1287.50px;top:264.00px;width:13.00px;height:130.00px;background:#3f7083;"></div><div class="a" style="left:1287.50px;top:622.00px;width:13.00px;height:2.00px;background:#d8d8d8;"></div>
<div class="hl" style="left:0;top:1010px;width:1301px"></div><svg style="left:4.00px;top:1016.00px;" width="12" height="12" viewBox="0 0 12 12"><path d="M1,3 L5,7 L1,11 M11,1 L7,5 L11,9" fill="none" stroke="#fff" stroke-width="1.1" transform="translate(0,-1)"/></svg><svg style="left:34.00px;top:1014.50px;" width="12" height="14" viewBox="0 0 12 14"><circle cx="3" cy="2.8" r="1.6" fill="none" stroke="#fff" stroke-width="1"/><circle cx="3" cy="11.2" r="1.6" fill="none" stroke="#fff" stroke-width="1"/><circle cx="9" cy="4.8" r="1.6" fill="none" stroke="#fff" stroke-width="1"/><path d="M3,4.4 V9.6 M9,6.4 Q9,8.6 3.2,9.4" fill="none" stroke="#fff" stroke-width="1"/></svg><div class="t" style="left:50.00px;top:1016.20px;font-size:12.30px;color:#fff;letter-spacing:-0.165px;">qomardev*</div><svg style="left:115.00px;top:1015.00px;" width="13" height="13" viewBox="0 0 13 13"><path d="M2,5.2 A4.8,4.8 0 0 1 11,4.6 M11.3,1.5 V5 H7.8 M11,7.8 A4.8,4.8 0 0 1 2,8.4 M1.7,11.5 V8 H5.2" fill="none" stroke="#fff" stroke-width="1.1"/></svg><div class="t" style="left:133.00px;top:1016.20px;font-size:12.30px;color:#fff;letter-spacing:-0.540px;">0↓ 18↑</div><div class="a" style="left:181px;top:1015.5px;width:12px;height:12px;border:1.1px solid #fff;border-radius:50%"></div><svg style="left:181.00px;top:1015.50px;" width="12" height="12" viewBox="0 0 12 12"><path d="M3.6,3.6 L8.4,8.4 M8.4,3.6 L3.6,8.4" stroke="#fff" stroke-width="1.1"/></svg><div class="t" style="left:197.00px;top:1016.20px;font-size:12.30px;color:#fff;">0</div><svg style="left:208.00px;top:1015.00px;" width="13" height="12" viewBox="0 0 13 12"><path d="M6.5,1 L12.3,11.3 H0.7 Z" fill="none" stroke="#fff" stroke-width="1.1" stroke-linejoin="round"/><path d="M6.5,4.5 V8 M6.5,9 V10.2" stroke="#fff" stroke-width="1"/></svg><div class="t" style="left:225.00px;top:1016.20px;font-size:12.30px;color:#fff;">0</div><svg style="left:248.00px;top:1015.00px;" width="13" height="13" viewBox="0 0 13 13"><path d="M6.5,5 L3.5,12.5 M6.5,5 L9.5,12.5 M4.6,9.5 H8.4" fill="none" stroke="#fff" stroke-width="1"/><circle cx="6.5" cy="4.3" r="1.2" fill="#fff"/><path d="M3.8,1.8 Q2.2,4.3 3.8,6.8 M9.2,1.8 Q10.8,4.3 9.2,6.8 M2,0.6 Q-0.3,4.3 2,8 M11,0.6 Q13.3,4.3 11,8" fill="none" stroke="#fff" stroke-width=".9"/></svg><div class="t" style="left:265.00px;top:1016.20px;font-size:12.30px;color:#fff;">0</div><svg style="left:286.00px;top:1014.50px;" width="15" height="14" viewBox="0 0 15 14"><path d="M5.5,6.5 V2 L13,7 L9.5,9" fill="none" stroke="#fff" stroke-width="1.1" stroke-linejoin="round"/><circle cx="4.6" cy="10.6" r="2.1" fill="none" stroke="#fff" stroke-width="1"/><path d="M1,8.8 L2.7,9.7 M0.8,11 H2.3 M1.2,13.2 L2.8,12 M8.2,8.8 L6.5,9.7 M8.4,11 H6.9 M8,13.2 L6.4,12" stroke="#fff" stroke-width=".8"/></svg><div class="t" style="left:317.00px;top:1016.20px;font-size:12.30px;color:#fff;letter-spacing:-0.165px;">Debug my code</div><div class="t" style="left:556.00px;top:1016.20px;font-size:12.30px;color:#fff;letter-spacing:-0.358px;">Ln 196, Col 15</div><div class="t" style="left:647.00px;top:1016.20px;font-size:12.30px;color:#fff;letter-spacing:-0.634px;">Spaces: 2</div><div class="t" style="left:712.00px;top:1016.20px;font-size:12.30px;color:#fff;letter-spacing:-0.769px;">UTF-8</div><div class="t" style="left:760.00px;top:1016.20px;font-size:12.30px;color:#fff;letter-spacing:-1.530px;">CRLF</div><div class="t" style="left:801.00px;top:1015.70px;font-size:12.30px;color:#fff;letter-spacing:1.213px;font-weight:700;">{}</div><div class="t" style="left:820.00px;top:1016.20px;font-size:12.30px;color:#fff;letter-spacing:-0.059px;">Dart</div><div class="t" style="left:856.00px;top:1016.20px;font-size:12.30px;color:#fff;letter-spacing:-0.123px;">Medium Tablet API 35 (android-x64 emulator)</div><div class="t" style="left:1114.00px;top:1016.20px;font-size:12.30px;color:#fff;letter-spacing:-0.323px;">Codeium: {...}</div><div class="a" style="left:1200.5px;top:1015.5px;width:12px;height:12px;border:1.1px solid #fff;border-radius:50%"></div><svg style="left:1200.50px;top:1015.50px;" width="12" height="12" viewBox="0 0 12 12"><path d="M9.4,2.6 L2.6,9.4" stroke="#fff" stroke-width="1.1"/></svg><div class="t" style="left:1217.00px;top:1016.20px;font-size:12.30px;color:#fff;letter-spacing:-0.081px;">Prettier</div><svg style="left:1272.00px;top:1014.50px;" width="14" height="14" viewBox="0 0 14 14"><path d="M3,10 V6 a4,4 0 0 1 8,0 V10 L12.3,11.5 H1.7 Z M5.6,12.2 a1.5,1.5 0 0 0 2.8,0" fill="none" stroke="#fff" stroke-width="1.1" stroke-linejoin="round"/><circle cx="10.8" cy="3" r="2.3" fill="#fff"/></svg>
<div class="hl" style="left:0;top:34px;width:1301px"></div>
<div class="hl" style="left:0;top:69px;width:1301px"></div>
<div class="hl" style="left:344px;top:91px;width:957px"></div>
<div class="vl" style="left:343.5px;top:35px;height:976px"></div>
</div>
<div class="a" style="left:1308px;top:55px;width:542px;height:896px;background:#000;border-radius:9px 9px 8px 8px;border:1px solid #2a2a2e"></div><div class="a" style="left:1309px;top:56px;width:540px;height:30.5px;background:#202020;border-radius:8px 8px 0 0"></div><div class="t" style="left:1318.00px;top:64.60px;font-size:12.50px;color:#fff;letter-spacing:-0.402px;">Android Emulator - Medium_Tablet_API_35:5554</div><div class="a" style="left:1309px;top:86px;width:540px;height:842px;background:#fdf6fe;overflow:hidden"><div class="t" style="left:11.00px;top:3.25px;font-size:9.50px;color:#8f8e93;letter-spacing:-0.155px;">12:32</div><svg style="left:38.50px;top:3.00px;" width="8" height="9" viewBox="0 0 8 9"><path d="M4,0.3 L7.7,1.6 V4.6 Q7.7,7.4 4,8.8 Q0.3,7.4 0.3,4.6 V1.6 Z" fill="#5d5d60"/><path d="M4,2.5 V6.5 Q5.8,5.6 5.8,4 V3 Z" fill="#fdf6fe"/></svg><svg style="left:55.00px;top:3.50px;" width="7" height="8" viewBox="0 0 7 8"><path d="M2,0 H6 a1,1 0 0 1 1,1 V7 a1,1 0 0 1 -1,1 H1 a1,1 0 0 1 -1,-1 V2 Z" fill="#5d5d60"/></svg><svg style="left:71.50px;top:4.00px;" width="7" height="7" viewBox="0 0 7 7"><rect x="0" y="0" width="7" height="7" rx="1" fill="#5d5d60"/><path d="M2.4,5.5 L3.5,1.6 L4.6,5.5" stroke="#fdf6fe" stroke-width=".8" fill="none"/></svg><svg style="left:491.00px;top:2.50px;" width="11" height="9" viewBox="0 0 11 9"><path d="M5.5,8.6 L0.3,2.3 Q5.5,-1.4 10.7,2.3 Z" fill="#5d5d60"/></svg><svg style="left:503.00px;top:2.50px;" width="9" height="9" viewBox="0 0 9 9"><path d="M8.5,0.5 V8.5 H0.5 Z" fill="#5d5d60"/></svg><svg style="left:514.00px;top:2.50px;" width="6" height="9" viewBox="0 0 6 9"><rect x=".5" y="1" width="5" height="8" rx=".8" fill="#5d5d60"/><rect x="2" y="0" width="2" height="1.4" fill="#5d5d60"/></svg><svg style="left:0;top:0" width="540" height="60" viewBox="0 0 540 60"><defs><filter id="rs" x="-20%" y="-20%" width="140%" height="140%"><feGaussianBlur stdDeviation="1.6"/></filter></defs><polygon points="500,0 514,0 540,26 540,40" fill="#000" opacity=".32" filter="url(#rs)" transform="translate(-1,2)"/><polygon points="501.8,0 513.8,0 540,26.2 540,38.2" fill="#b64a4d"/><text x="524.6" y="18.6" font-family="Liberation Sans" font-weight="700" font-size="5.6" fill="#fff" text-anchor="middle" transform="rotate(45 524.6 16.6)" letter-spacing=".2">DEBUG</text></svg><div class="t" style="left:269.00px;transform:translateX(-50%);top:41.00px;font-size:12.00px;color:#1c1b1f;letter-spacing:0.214px;font-weight:700;">Dashboard</div><div class="a" style="left:22.20px;top:46.40px;width:1.60px;height:1.60px;background:#1c1b1f;border-radius:.6px"></div><div class="a" style="left:510.20px;top:46.40px;width:1.60px;height:1.60px;background:#1c1b1f;border-radius:.6px"></div><div class="a" style="left:25.10px;top:46.40px;width:1.60px;height:1.60px;background:#1c1b1f;border-radius:.6px"></div><div class="a" style="left:513.10px;top:46.40px;width:1.60px;height:1.60px;background:#1c1b1f;border-radius:.6px"></div><div class="a" style="left:28.00px;top:46.40px;width:1.60px;height:1.60px;background:#1c1b1f;border-radius:.6px"></div><div class="a" style="left:516.00px;top:46.40px;width:1.60px;height:1.60px;background:#1c1b1f;border-radius:.6px"></div><div class="a" style="left:20px;top:78.7px;width:499.5px;height:139px;background:#23205c;border-radius:10px"></div><svg style="left:248.90px;top:91.90px;" width="42" height="42" viewBox="0 0 42 42"><defs><clipPath id="av"><circle cx="21" cy="21" r="21"/></clipPath></defs><g clip-path="url(#av)"><rect width="42" height="42" fill="#ad0202"/><path d="M0,31 Q7,25 14,25.5 L28,25.5 Q35,25 42,32 V42 H0 Z" fill="#1a6fe0"/><path d="M12,0 Q9,10 9.5,20 Q8,30 6,38 L14,40 L17,26 L24,26 L27,38 L31.5,33 Q33,28 30.5,20 Q31,8 28,0 Z" fill="#17141a"/><path d="M16.5,24 L23.5,24 L23,30 L20.2,37 L17.5,30 Z" fill="#d6a387"/><ellipse cx="20" cy="11.5" rx="8.8" ry="13.8" fill="#dcaf93"/><ellipse cx="15.8" cy="9.6" rx="1.8" ry=".7" fill="#6a5552"/><ellipse cx="24" cy="9.6" rx="1.8" ry=".7" fill="#6a5552"/><path d="M17.5,15.3 Q20,16.3 22.3,15.3" stroke="#b98a72" stroke-width="1" fill="none"/><path d="M16.8,19.3 Q20,20.6 23.2,19.3" stroke="#c8766e" stroke-width="1.5" fill="none"/></g></svg><div class="t" style="left:269.00px;transform:translateX(-50%);top:142.75px;font-size:13.50px;color:#fff;letter-spacing:-0.149px;font-weight:700;">Eliswati Ningse</div><div class="t" style="left:269.00px;transform:translateX(-50%);top:159.55px;font-size:9.50px;color:#e4e2ee;letter-spacing:-0.093px;">Poles</div><div class="a" style="left:135.7px;top:177.8px;width:79.5px;height:27px;background:#fa2d73;border-radius:14px"></div><svg style="left:152.50px;top:185.00px;" width="13" height="12" viewBox="0 0 13 12"><path d="M6.5,1 H1 V11 H6.5" fill="none" stroke="#ff9f1c" stroke-width="1.1"/><path d="M4.5,6 H12 M9.3,3.2 L12.2,6 L9.3,8.8" fill="none" stroke="#ff9f1c" stroke-width="1.3"/></svg><div class="t" style="left:172.00px;top:186.75px;font-size:9.50px;color:#fff;letter-spacing:-0.428px;font-weight:700;">Keluar</div><div class="a" style="left:330.7px;top:177.8px;width:72.8px;height:27px;background:#fa2d73;border-radius:14px"></div><svg style="left:347.00px;top:186.00px;" width="14" height="10" viewBox="0 0 14 10"><path d="M3.5,9.5 a3,3 0 0 1 -.2,-6 a4,4 0 0 1 7.6,-.5 a3.3,3.3 0 0 1 -.2,6.5 Z" fill="#7cb686"/><path d="M7,3.5 V7.5 M5.3,6 L7,7.7 L8.7,6" fill="none" stroke="#e0355f" stroke-width="1"/></svg><div class="t" style="left:367.50px;top:186.75px;font-size:9.50px;color:#fff;letter-spacing:-0.802px;font-weight:700;">Sync</div><div class="t" style="left:20.00px;top:246.75px;font-size:10.50px;color:#23215b;letter-spacing:0.531px;font-weight:700;">Statistics</div><div class="a" style="left:-10px;top:299.5px;width:33px;height:174px;background:#f7f2fa;border-radius:4px;box-shadow:0 2px 3px rgba(0,0,0,.28),0 0 1px rgba(0,0,0,.2)"></div><div class="a" style="left:516px;top:299.5px;width:33px;height:174px;background:#f7f2fa;border-radius:4px;box-shadow:0 2px 3px rgba(0,0,0,.28),0 0 1px rgba(0,0,0,.2)"></div><div class="t" style="left:1.50px;top:342.35px;font-size:6.50px;color:#555;">%</div><div class="t" style="left:1.50px;top:358.35px;font-size:6.50px;color:#555;">%</div><div class="t" style="left:1.50px;top:374.15px;font-size:6.50px;color:#555;">G</div><div class="t" style="left:1.50px;top:390.05px;font-size:6.50px;color:#555;">G</div><div class="t" style="left:1.50px;top:405.85px;font-size:6.50px;color:#555;">G</div><div class="t" style="left:1.50px;top:421.65px;font-size:6.50px;color:#555;">G</div><div class="t" style="left:1.50px;top:437.45px;font-size:6.50px;color:#555;">G</div><div class="t" style="left:1.50px;top:453.35px;font-size:6.50px;color:#555;">G</div><div class="a" style="left:525px;top:331.5px;width:30px;height:46px;border:1px solid #b8b4be;border-radius:5px;background:#fdfbff"></div><div class="a" style="left:525px;top:384.5px;width:30px;height:46px;border:1px solid #b8b4be;border-radius:5px;background:#fdfbff"></div><div class="a" style="left:56.5px;top:271.2px;width:426.5px;height:230px;background:#f6f2f8;border-radius:5px;box-shadow:0 2px 3px rgba(0,0,0,.28),0 0 1px rgba(0,0,0,.2)"></div><div class="t" style="left:269.00px;transform:translateX(-50%);top:284.50px;font-size:11.00px;color:#1c1b1f;letter-spacing:0.050px;font-weight:700;">Poles Manual</div><div class="a" style="left:56.5px;top:309.0px;width:426.5px;height:176.6px;overflow:hidden"><div class="t" style="left:17.50px;top:10.25px;font-size:9.20px;color:#1c1b1f;letter-spacing:0.308px;font-weight:700;">Performance Cycle Time</div><div class="t" style="right:18.00px;top:10.25px;font-size:9.20px;color:#3a393d;letter-spacing:-0.446px;">143.47%</div><div class="t" style="left:17.50px;top:28.45px;font-size:9.20px;color:#1c1b1f;letter-spacing:0.214px;font-weight:700;">Effisiensi Waktu Kerja</div><div class="t" style="right:18.00px;top:28.45px;font-size:9.20px;color:#3a393d;letter-spacing:-0.450px;">91.40%</div><div class="t" style="left:17.50px;top:46.65px;font-size:9.20px;color:#1c1b1f;letter-spacing:0.329px;font-weight:700;">Produktifitas</div><div class="t" style="right:18.00px;top:46.65px;font-size:9.20px;color:#3a393d;letter-spacing:-0.546px;">127.20%</div><div class="t" style="left:17.50px;top:64.85px;font-size:9.20px;color:#1c1b1f;letter-spacing:0.306px;font-weight:700;">Persentase Output</div><div class="t" style="right:18.00px;top:64.85px;font-size:9.20px;color:#3a393d;letter-spacing:-0.374px;">106.87%</div><div class="t" style="left:17.50px;top:83.05px;font-size:9.20px;color:#1c1b1f;letter-spacing:0.322px;font-weight:700;">Total Check</div><div class="t" style="left:212.50px;transform:translateX(-50%);top:83.05px;font-size:9.20px;color:#3a393d;letter-spacing:0.205px;">8328 Pcs</div><div class="t" style="right:18.00px;top:83.05px;font-size:9.20px;color:#3a393d;letter-spacing:-0.303px;">100.00%</div><div class="t" style="left:17.50px;top:101.25px;font-size:9.20px;color:#1c1b1f;letter-spacing:0.235px;font-weight:700;">Total Ok</div><div class="t" style="left:212.50px;transform:translateX(-50%);top:101.25px;font-size:9.20px;color:#3a393d;letter-spacing:0.205px;">7644 Pcs</div><div class="t" style="right:18.00px;top:101.25px;font-size:9.20px;color:#3a393d;letter-spacing:-0.600px;">91.79%</div><div class="t" style="left:17.50px;top:119.45px;font-size:9.20px;color:#1c1b1f;letter-spacing:0.265px;font-weight:700;">Total Tidak Sesuai</div><div class="t" style="left:212.50px;transform:translateX(-50%);top:119.45px;font-size:9.20px;color:#3a393d;letter-spacing:0.251px;">684 Pcs</div><div class="t" style="right:18.00px;top:119.45px;font-size:9.20px;color:#3a393d;letter-spacing:-0.757px;">8.21%</div><div class="t" style="left:17.50px;top:137.65px;font-size:9.20px;color:#1c1b1f;letter-spacing:0.285px;font-weight:700;">Kasar</div><div class="t" style="left:212.50px;transform:translateX(-50%);top:137.65px;font-size:9.20px;color:#3a393d;letter-spacing:-0.106px;">145 Pcs</div><div class="t" style="right:18.00px;top:137.65px;font-size:9.20px;color:#3a393d;letter-spacing:-0.757px;">1.74%</div><div class="t" style="left:17.50px;top:155.85px;font-size:9.20px;color:#1c1b1f;letter-spacing:0.394px;font-weight:700;">Ngasep</div><div class="t" style="left:212.50px;transform:translateX(-50%);top:155.85px;font-size:9.20px;color:#3a393d;letter-spacing:-0.106px;">183 Pcs</div><div class="t" style="right:18.00px;top:155.85px;font-size:9.20px;color:#3a393d;letter-spacing:-0.317px;">2.20%</div><div class="t" style="left:17.50px;top:174.05px;font-size:9.20px;color:#1c1b1f;letter-spacing:0.677px;font-weight:700;">Dekok</div><div class="t" style="left:212.50px;transform:translateX(-50%);top:174.05px;font-size:9.20px;color:#3a393d;letter-spacing:-0.106px;">198 Pcs</div><div class="t" style="right:18.00px;top:174.05px;font-size:9.20px;color:#3a393d;letter-spacing:-0.317px;">2.38%</div></div><div class="t" style="left:269.00px;transform:translateX(-50%);top:527.00px;font-size:10.00px;color:#6750a4;letter-spacing:0.098px;">Refresh</div><div class="t" style="left:20.00px;top:570.25px;font-size:10.50px;color:#23215b;letter-spacing:0.316px;font-weight:700;">Proses Kerja</div><div class="a" style="left:20.0px;top:592.0px;width:246.5px;height:80.5px;background:#eef6fd;border-radius:12px"></div><svg style="left:30.70px;top:605.70px;" width="27" height="21.5" viewBox="0 0 27 21.5"><rect x="1.3" y="0" width="24.3" height="11" rx="2.6" fill="#4260bb"/><path d="M0,5.2 a3,3 0 0 1 3,-3 h4.3 c1.6,0 2.1,1 2.7,2.2 c.6,1.2 1.1,2 2.7,2 H24 a3,3 0 0 1 3,3 V18.5 a3,3 0 0 1 -3,3 H3 a3,3 0 0 1 -3,-3 Z" fill="#557ff3"/></svg><div class="t" style="left:31.00px;top:638.95px;font-size:10.70px;color:#4a5cb4;letter-spacing:0.389px;">Poles Manual</div><div class="a" style="left:273.0px;top:592.0px;width:246.5px;height:80.5px;background:#fefaea;border-radius:12px"></div><svg style="left:283.70px;top:605.70px;" width="27" height="21.5" viewBox="0 0 27 21.5"><rect x="1.3" y="0" width="24.3" height="11" rx="2.6" fill="#ffaa18"/><path d="M0,5.2 a3,3 0 0 1 3,-3 h4.3 c1.6,0 2.1,1 2.7,2.2 c.6,1.2 1.1,2 2.7,2 H24 a3,3 0 0 1 3,3 V18.5 a3,3 0 0 1 -3,3 H3 a3,3 0 0 1 -3,-3 Z" fill="#ffd968"/></svg><div class="t" style="left:284.00px;top:638.95px;font-size:10.70px;color:#f5a623;letter-spacing:0.422px;">Ultrasonic + Kering Poles Manual</div><div class="a" style="left:20.0px;top:680.0px;width:246.5px;height:80.5px;background:#effffd;border-radius:12px"></div><svg style="left:30.70px;top:693.70px;" width="27" height="21.5" viewBox="0 0 27 21.5"><rect x="1.3" y="0" width="24.3" height="11" rx="2.6" fill="#25a6a6"/><path d="M0,5.2 a3,3 0 0 1 3,-3 h4.3 c1.6,0 2.1,1 2.7,2.2 c.6,1.2 1.1,2 2.7,2 H24 a3,3 0 0 1 3,3 V18.5 a3,3 0 0 1 -3,3 H3 a3,3 0 0 1 -3,-3 Z" fill="#34dfdf"/></svg><div class="t" style="left:31.00px;top:726.95px;font-size:10.70px;color:#2ba9a9;letter-spacing:0.426px;">Pemilahan Hasil Proses Manual</div><div class="a" style="left:273.0px;top:680.0px;width:246.5px;height:80.5px;background:#feeeed;border-radius:12px"></div><svg style="left:283.70px;top:693.70px;" width="27" height="21.5" viewBox="0 0 27 21.5"><rect x="1.3" y="0" width="24.3" height="11" rx="2.6" fill="#a83d3d"/><path d="M0,5.2 a3,3 0 0 1 3,-3 h4.3 c1.6,0 2.1,1 2.7,2.2 c.6,1.2 1.1,2 2.7,2 H24 a3,3 0 0 1 3,3 V18.5 a3,3 0 0 1 -3,3 H3 a3,3 0 0 1 -3,-3 Z" fill="#f25555"/></svg><div class="t" style="left:284.00px;top:726.95px;font-size:10.70px;color:#a94343;letter-spacing:0.310px;">QC Poles Manual</div><div class="a" style="left:20.0px;top:767.5px;width:246.5px;height:80.5px;background:#eef6fd;border-radius:12px"></div><svg style="left:30.70px;top:781.20px;" width="27" height="21.5" viewBox="0 0 27 21.5"><rect x="1.3" y="0" width="24.3" height="11" rx="2.6" fill="#4260bb"/><path d="M0,5.2 a3,3 0 0 1 3,-3 h4.3 c1.6,0 2.1,1 2.7,2.2 c.6,1.2 1.1,2 2.7,2 H24 a3,3 0 0 1 3,3 V18.5 a3,3 0 0 1 -3,3 H3 a3,3 0 0 1 -3,-3 Z" fill="#557ff3"/></svg><div class="t" style="left:31.00px;top:814.45px;font-size:10.70px;color:#4a5cb4;letter-spacing:0.379px;">Preparation Poles Mesin</div><div class="a" style="left:273.0px;top:767.5px;width:246.5px;height:80.5px;background:#fefaea;border-radius:12px"></div><svg style="left:283.70px;top:781.20px;" width="27" height="21.5" viewBox="0 0 27 21.5"><rect x="1.3" y="0" width="24.3" height="11" rx="2.6" fill="#ffaa18"/><path d="M0,5.2 a3,3 0 0 1 3,-3 h4.3 c1.6,0 2.1,1 2.7,2.2 c.6,1.2 1.1,2 2.7,2 H24 a3,3 0 0 1 3,3 V18.5 a3,3 0 0 1 -3,3 H3 a3,3 0 0 1 -3,-3 Z" fill="#ffd968"/></svg><div class="t" style="left:284.00px;top:814.45px;font-size:10.70px;color:#f5a623;letter-spacing:0.340px;">Grinding Poles Mesin</div></div><div class="a" style="left:1504.50px;top:937.60px;width:148.50px;height:2.20px;background:#fff;border-radius:1px"></div><div class="a" style="left:1849px;top:86.5px;width:65px;height:514px;background:#efefef;border:1px solid #000;border-bottom:none"></div><div class="a" style="left:1863.50px;top:100.60px;width:8.00px;height:1.30px;background:#5f8797;"></div><svg style="left:1891.00px;top:97.00px;" width="8" height="8" viewBox="0 0 8 8"><path d="M0.7,0.7 L7.3,7.3 M7.3,0.7 L0.7,7.3" stroke="#5f8797" stroke-width="1.3"/></svg><svg style="left:1871.00px;top:123.00px;" width="20" height="21" viewBox="0 0 20 21"><path d="M5.3,4.4 A8,8 0 1 0 14.7,4.4" fill="none" stroke="#5f8797" stroke-width="2.2"/><path d="M10,0.3 V9.8" stroke="#5f8797" stroke-width="2.2"/></svg><svg style="left:1871.00px;top:167.50px;" width="20" height="20" viewBox="0 0 20 20"><path d="M0.8,7 H5 L10,2 V18 L5,13 H0.8 Z" fill="#5f8797"/><path d="M12,5.6 Q15,10 12,14.4 Z" fill="#5f8797"/><path d="M12.2,1.6 A8.6,8.6 0 0 1 12.2,18.4" fill="none" stroke="#5f8797" stroke-width="2"/></svg><svg style="left:1873.00px;top:213.00px;" width="16" height="18" viewBox="0 0 16 18"><path d="M0.8,6 H5 L10,1 V17 L5,12 H0.8 Z" fill="#5f8797"/><path d="M12,4.6 Q15.4,9 12,13.4 Z" fill="#5f8797"/></svg><svg style="left:1870.50px;top:256.00px;" width="21" height="18" viewBox="0 0 21 18"><path d="M2,3.2 H5.6 L7.4,1 H13.6 L15.4,3.2 H19 a1.6,1.6 0 0 1 1.6,1.6 V15.6 a1.6,1.6 0 0 1 -1.6,1.6 H2 a1.6,1.6 0 0 1 -1.6,-1.6 V4.8 A1.6,1.6 0 0 1 2,3.2 Z" fill="#5f8797"/><circle cx="10.5" cy="10" r="4.9" fill="#efefef"/><circle cx="10.5" cy="10" r="3" fill="#5f8797"/></svg><svg style="left:1872.00px;top:301.00px;" width="18" height="18" viewBox="0 0 18 18"><circle cx="7" cy="7" r="5.6" fill="none" stroke="#5f8797" stroke-width="1.8"/><path d="M11,11 L17,17" stroke="#5f8797" stroke-width="2.2"/><path d="M4.4,7 H9.6 M7,4.4 V9.6" stroke="#5f8797" stroke-width="1.3"/></svg><svg style="left:1870.00px;top:343.00px;" width="23" height="23" viewBox="0 0 23 23"><rect x="6.5" y="3" width="10" height="17" rx="1.2" fill="none" stroke="#5f8797" stroke-width="2.2" transform="rotate(-45 11.5 11.5)"/><path d="M14.5,0.8 A10,10 0 0 1 22,8" fill="none" stroke="#5f8797" stroke-width="1.5"/></svg><svg style="left:1869.00px;top:387.00px;" width="23" height="23" viewBox="0 0 23 23"><rect x="6.5" y="3" width="10" height="17" rx="1.2" fill="none" stroke="#5f8797" stroke-width="2.2" transform="rotate(45 11.5 11.5)"/><path d="M8.5,0.8 A10,10 0 0 0 1,8" fill="none" stroke="#5f8797" stroke-width="1.5"/></svg><svg style="left:1874.00px;top:434.00px;" width="14" height="16" viewBox="0 0 14 16"><path d="M12,1.5 V14.5 L1.5,8 Z" fill="none" stroke="#5f8797" stroke-width="1.9" stroke-linejoin="round"/></svg><div class="a" style="left:1873.5px;top:479px;width:15px;height:15px;border:2px solid #5f8797;border-radius:50%"></div><div class="a" style="left:1873.8px;top:523px;width:14.5px;height:14.5px;border:2px solid #5f8797;border-radius:1.5px"></div><div class="a" style="left:1872.5px;top:572.2px;width:4px;height:4px;border-radius:50%;background:#5f8797"></div><div class="a" style="left:1878.2px;top:572.2px;width:4px;height:4px;border-radius:50%;background:#5f8797"></div><div class="a" style="left:1883.9px;top:572.2px;width:4px;height:4px;border-radius:50%;background:#5f8797"></div>
<div class="a" style="left:0;top:1032px;width:1920px;height:48px;background:#231f1e"></div><div class="a" style="left:0.00px;top:1032.00px;width:1920.00px;height:1.00px;background:#3d3a39;"></div><div class="a" style="left:751.00px;top:1045.00px;width:11.30px;height:11.30px;background:linear-gradient(135deg,#5fd0fb,#1c9cf0);"></div><div class="a" style="left:763.50px;top:1045.00px;width:11.30px;height:11.30px;background:linear-gradient(135deg,#5fd0fb,#1c9cf0);"></div><div class="a" style="left:751.00px;top:1057.50px;width:11.30px;height:11.30px;background:linear-gradient(135deg,#5fd0fb,#1c9cf0);"></div><div class="a" style="left:763.50px;top:1057.50px;width:11.30px;height:11.30px;background:linear-gradient(135deg,#5fd0fb,#1c9cf0);"></div><svg style="left:794.00px;top:1044.00px;" width="26" height="24" viewBox="0 0 26 24"><path d="M1,4 a1.5,1.5 0 0 1 1.5,-1.5 h6 l2.5,2.5 h12.5 a1.5,1.5 0 0 1 1.5,1.5 v14 a1.5,1.5 0 0 1 -1.5,1.5 h-21.500000000000004 a1.5,1.5 0 0 1 -1.5,-1.5 Z" fill="#f4b92c"/><path d="M1,8.5 h24 v12 a1.5,1.5 0 0 1 -1.5,1.5 h-21 a1.5,1.5 0 0 1 -1.5,-1.5 Z" fill="#fdd55a"/><rect x="7" y="16" width="12" height="6" rx="1" fill="#2f8fe6"/><rect x="10" y="18" width="6" height="1.6" fill="#9fd0ff"/></svg><div class="a" style="left:838px;top:1044px;width:25px;height:25px;border-radius:50%;background:conic-gradient(from 200deg,#1b6fc9,#1aa3e8 25%,#4fd06a 50%,#35c1f1 62%,#0f5fbf 85%,#1b6fc9)"></div><div class="a" style="left:845px;top:1052px;width:13px;height:11px;border-radius:50%;background:#1f1c1b"></div><div class="a" style="left:844px;top:1056px;width:19px;height:12px;border-radius:0 0 12px 12px;background:#1565c0"></div><svg style="left:882.00px;top:1044.00px;" width="26" height="26" viewBox="0 0 26 26"><path d="M18.6,0.8 L8.5,10.6 3.6,6.8 1.3,8 6,13 1.3,18 3.6,19.2 8.5,15.4 18.6,25.2 24.8,22.4 V3.6 Z M18.6,7.6 V18.4 L11.4,13 Z" fill="#1f9cf0" fill-rule="evenodd"/></svg><svg style="left:927.00px;top:1044.00px;" width="24" height="25" viewBox="0 0 24 25"><circle cx="12" cy="15" r="8.5" fill="none" stroke="#e8b93a" stroke-width="2"/><path d="M5,11 Q4,2 9,1.5 Q12,6 11,9 M19,11 Q20,2 15,1.5 Q12,6 13,9" fill="none" stroke="#e8b93a" stroke-width="2"/><path d="M6,16 Q12,21 18,16" fill="none" stroke="#e8b93a" stroke-width="1.6"/></svg><div class="a" style="left:971.00px;top:1044.00px;width:24.00px;height:24.00px;background:#3d3c3b;border-radius:2px"></div><svg style="left:971.00px;top:1044.00px;" width="24" height="24" viewBox="0 0 24 24"><path d="M6,7.5 L18,4 V8.5 L10,11 L18,14 V19 L6,22 V17.5 L14,15 L6,12 Z" fill="#ff9800" transform="translate(0,-1)"/></svg><div class="a" style="left:1014px;top:1044px;width:25px;height:25px;border-radius:50%;background:conic-gradient(from 300deg,#ea4335 0 120deg,#fcc934 120deg 240deg,#34a853 240deg 360deg)"></div><div class="a" style="left:1020.5px;top:1050.5px;width:12px;height:12px;border-radius:50%;background:#4285f4;border:2px solid #fff"></div><div class="a" style="left:1066.00px;top:1049.00px;width:14.00px;height:10.00px;background:#7fd0f5;border:1.5px solid #d8e8f0"></div><div class="a" style="left:1072.00px;top:1046.00px;width:13.00px;height:9.00px;background:#4caf50;border:1.5px solid #d0e8d0"></div><div class="a" style="left:1064.00px;top:1054.00px;width:13.00px;height:10.00px;background:#39a9ea;border:1.5px solid #e0eef8"></div><div class="a" style="left:1067.00px;top:1065.00px;width:8.00px;height:2.00px;background:#cfd8dc;"></div><div class="t" style="left:1058.00px;top:1044.35px;font-size:12.00px;color:#ff6d00;font-weight:700;">R</div><div class="a" style="left:1103px;top:1044px;width:25px;height:25px;border-radius:50%;background:#fff"></div><svg style="left:1103.00px;top:1044.00px;" width="25" height="25" viewBox="0 0 25 25"><path d="M12.5,5 L6.5,19 M12.5,5 L18.5,19 M8.5,14.5 H16.5" fill="none" stroke="#3b82e8" stroke-width="2.2"/><circle cx="12.5" cy="6" r="2" fill="none" stroke="#333" stroke-width="1"/><path d="M18,10 l3,2 -3,2" fill="#4caf50"/></svg><div class="a" style="left:1139px;top:1036px;width:40px;height:41px;border-radius:4px;background:#2d2a29;border:1px solid #383534"></div><div class="a" style="left:1147px;top:1044px;width:25px;height:25px;border-radius:50%;background:#fff"></div><div class="a" style="left:1154.50px;top:1049.00px;width:10.00px;height:15.00px;background:#3ddc84;border-radius:2px;border-left:3px solid #4285f4;border-top:1.5px solid #4285f4;border-bottom:1.5px solid #4285f4"></div><div class="a" style="left:891.50px;top:1072.00px;width:6.00px;height:2.50px;background:#8a8786;border-radius:1.5px"></div><div class="a" style="left:935.50px;top:1072.00px;width:6.00px;height:2.50px;background:#8a8786;border-radius:1.5px"></div><div class="a" style="left:979.50px;top:1072.00px;width:6.00px;height:2.50px;background:#8a8786;border-radius:1.5px"></div><div class="a" style="left:1023.50px;top:1072.00px;width:6.00px;height:2.50px;background:#8a8786;border-radius:1.5px"></div><div class="a" style="left:1067.50px;top:1072.00px;width:6.00px;height:2.50px;background:#8a8786;border-radius:1.5px"></div><div class="a" style="left:1111.50px;top:1072.00px;width:6.00px;height:2.50px;background:#8a8786;border-radius:1.5px"></div><div class="a" style="left:1151.00px;top:1072.00px;width:16.00px;height:3.00px;background:#a9a6a5;border-radius:1.5px"></div><svg style="left:1696.00px;top:1051.00px;" width="12" height="8" viewBox="0 0 12 8"><polyline points="1,7 6,1.5 11,7" fill="none" stroke="#f0f0f0" stroke-width="1.4"/></svg><svg style="left:1726.00px;top:1049.00px;" width="17" height="14" viewBox="0 0 17 14"><path d="M4,11.5 a3,3 0 0 1 .3,-6 a4.2,4.2 0 0 1 8,-0.6 a3.4,3.4 0 0 1 .7,6.6 Z" fill="#8a8a8a"/><path d="M2.5,1 L14.5,13" stroke="#d0d0d0" stroke-width="1.2"/></svg><svg style="left:1757.00px;top:1047.00px;" width="18" height="18" viewBox="0 0 18 18"><rect x="1.5" y="2" width="11" height="9.5" fill="none" stroke="#f0f0f0" stroke-width="1.2"/><path d="M4.5,15.5 H10 M7,11.5 V15.5" stroke="#f0f0f0" stroke-width="1.2"/><rect x="12.8" y="1.5" width="3.6" height="5.5" rx=".8" fill="#1f1c1b" stroke="#f0f0f0" stroke-width="1"/><path d="M14.6,7 V15.5" stroke="#f0f0f0" stroke-width="1"/></svg><svg style="left:1781.00px;top:1048.00px;" width="18" height="16" viewBox="0 0 18 16"><path d="M1.5,5.5 H4.5 L8,2.5 V13.5 L4.5,10.5 H1.5 Z" fill="none" stroke="#f0f0f0" stroke-width="1.2" stroke-linejoin="round"/><path d="M10.3,5.6 Q12,8 10.3,10.4" fill="none" stroke="#f0f0f0" stroke-width="1"/><path d="M12.4,3.8 Q15,8 12.4,12.2" fill="none" stroke="#9a9a9a" stroke-width="1"/><path d="M14.6,2.2 Q18.2,8 14.6,13.8" fill="none" stroke="#6a6a6a" stroke-width="1"/></svg><div class="t" style="right:43.00px;top:1042.85px;font-size:12.00px;color:#f5f5f5;letter-spacing:-0.406px;">12:33</div><div class="t" style="right:43.00px;top:1058.85px;font-size:12.00px;color:#f5f5f5;letter-spacing:0.183px;">21/11/2024</div><svg style="left:1885.00px;top:1048.00px;" width="14" height="16" viewBox="0 0 14 16"><path d="M7,1 a4.6,4.6 0 0 1 4.6,4.6 V10 l1.6,2.2 H0.8 L2.4,10 V5.6 A4.6,4.6 0 0 1 7,1 Z" fill="#e6e6e6"/><path d="M5.2,13.4 a1.9,1.9 0 0 0 3.6,0 Z" fill="#e6e6e6"/></svg>
</body></html>
